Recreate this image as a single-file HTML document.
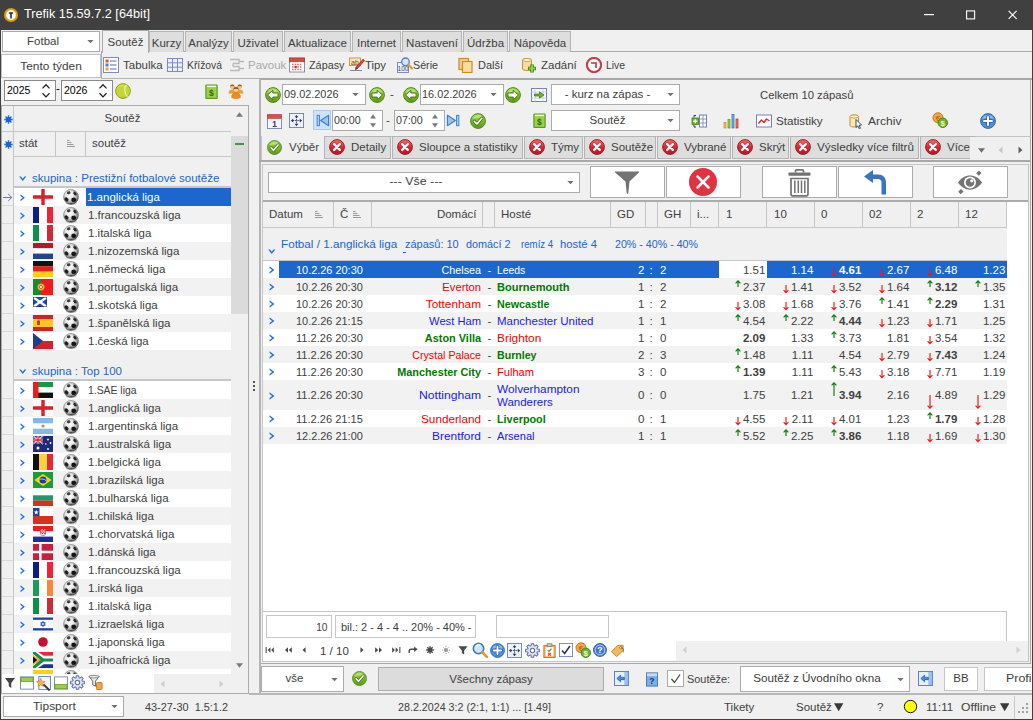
<!DOCTYPE html>
<html lang="cs"><head><meta charset="utf-8"><title>Trefik 15.59.7.2 [64bit]</title>
<style>
html,body{margin:0;padding:0;}
body{width:1033px;height:720px;overflow:hidden;background:#f0f0f0;font-family:"Liberation Sans",sans-serif;font-size:11.5px;color:#404040;position:relative;}
#w{position:absolute;left:0;top:0;width:1033px;height:720px;overflow:hidden;}
#w div,#w span.t,#w svg.i{position:absolute;box-sizing:border-box;}
#w span.t{white-space:nowrap;display:block;}
</style></head><body><div id="w">
<div style="left:0px;top:0px;width:1033px;height:30px;background:#404040;"></div>
<svg class="i" style="left:4px;top:8px;" width="14" height="14" viewBox="0 0 16 16" preserveAspectRatio="none"><circle cx="8" cy="8" r="6.800" fill="#f8f8f8" stroke="#e0a014" stroke-width="2.400"/><circle cx="8" cy="8" r="7.800" fill="none" stroke="#a87408" stroke-width=".4"/><path d="M5.600 4.800h4.800v1.700H8.900v5.400H7.100V6.500H5.600z" fill="#2a2a2a"/></svg>
<span class="t" style="left:24px;top:4px;line-height:20px;height:20px;color:#fff;font-size:13px;transform:scaleX(0.9777);transform-origin:0 0;">Trefik 15.59.7.2 [64bit]</span>
<svg class="i" style="left:924px;top:14px;" width="10" height="2" viewBox="0 0 10 2"><rect width="10" height="1.200" fill="#fff"/></svg>
<svg class="i" style="left:966px;top:10px;" width="10" height="10" viewBox="0 0 10 10"><rect x=".6" y=".9" width="8" height="8" fill="none" stroke="#fff" stroke-width="1.100"/></svg>
<svg class="i" style="left:1008px;top:10px;" width="10" height="10" viewBox="0 0 10 10"><path d="M.6 .9L8.600 8.900M8.600 .9L.6 8.900" stroke="#fff" stroke-width="1.150"/></svg>
<div style="left:101px;top:51px;width:932px;height:1px;background:#ababab"></div>
<div style="left:2px;top:31px;width:98px;height:21px;background:#fff;border:1px solid #ababab;"></div>
<span class="t" style="left:3px;top:31px;line-height:21px;height:21px;width:80px;text-align:center;">Fotbal</span>
<svg class="i" style="left:87px;top:40px;" width="7" height="4" viewBox="0 0 7 4"><path d="M.3 0h6.400L3.500 3.200z" fill="#727272"/></svg>
<div style="left:149px;top:31px;width:35px;height:21px;background:#dedede;border:1px solid #b4b4b4;border-bottom:none;"></div>
<span class="t" style="left:149px;top:34px;line-height:19px;height:19px;width:35px;text-align:center;">Kurzy</span>
<div style="left:185px;top:31px;width:47px;height:21px;background:#dedede;border:1px solid #b4b4b4;border-bottom:none;"></div>
<span class="t" style="left:185px;top:34px;line-height:19px;height:19px;width:47px;text-align:center;">Analýzy</span>
<div style="left:233px;top:31px;width:50px;height:21px;background:#dedede;border:1px solid #b4b4b4;border-bottom:none;"></div>
<span class="t" style="left:233px;top:34px;line-height:19px;height:19px;width:50px;text-align:center;">Uživatel</span>
<div style="left:284px;top:31px;width:67px;height:21px;background:#dedede;border:1px solid #b4b4b4;border-bottom:none;"></div>
<span class="t" style="left:284px;top:34px;line-height:19px;height:19px;width:67px;text-align:center;">Aktualizace</span>
<div style="left:352px;top:31px;width:49px;height:21px;background:#dedede;border:1px solid #b4b4b4;border-bottom:none;"></div>
<span class="t" style="left:352px;top:34px;line-height:19px;height:19px;width:49px;text-align:center;">Internet</span>
<div style="left:402px;top:31px;width:60px;height:21px;background:#dedede;border:1px solid #b4b4b4;border-bottom:none;"></div>
<span class="t" style="left:402px;top:34px;line-height:19px;height:19px;width:60px;text-align:center;">Nastavení</span>
<div style="left:463px;top:31px;width:45px;height:21px;background:#dedede;border:1px solid #b4b4b4;border-bottom:none;"></div>
<span class="t" style="left:463px;top:34px;line-height:19px;height:19px;width:45px;text-align:center;">Údržba</span>
<div style="left:509px;top:31px;width:62px;height:21px;background:#dedede;border:1px solid #b4b4b4;border-bottom:none;"></div>
<span class="t" style="left:509px;top:34px;line-height:19px;height:19px;width:62px;text-align:center;">Nápověda</span>
<div style="left:102px;top:30px;width:47px;height:23px;background:#f0f0f0;border:1px solid #ababab;border-bottom:none;"></div>
<span class="t" style="left:102px;top:32px;line-height:21px;height:21px;width:47px;text-align:center;">Soutěž</span>
<div style="left:1px;top:54px;width:100px;height:24px;background:#fff;border:1px solid #c0c0c0;"></div>
<span class="t" style="left:1px;top:54px;line-height:24px;height:24px;width:100px;text-align:center;transform:scaleX(1.0344);transform-origin:50% 0;">Tento týden</span>
<div style="left:101px;top:52px;width:1px;height:27px;background:#ababab"></div>
<svg class="i" style="left:103px;top:57px;" width="16" height="16" viewBox="0 0 16 16"><rect x=".5" y=".5" width="15" height="15" fill="#fff" stroke="#7c8cc0" stroke-width="1"/><rect x="2.500" y="2.500" width="3" height="3" fill="#e0503c"/><rect x="2.500" y="6.500" width="3" height="3" fill="#4d7fd0"/><rect x="2.500" y="10.500" width="3" height="3" fill="#f0a030"/><path d="M7 4h6.500M7 8h6.500M7 12h6.500" stroke="#5a6aa0" stroke-width="1.200"/></svg>
<span class="t" style="left:123px;top:55px;line-height:20px;height:20px;color:#404040;">Tabulka</span>
<svg class="i" style="left:167px;top:57px;" width="16" height="16" viewBox="0 0 16 16"><rect x=".5" y="1.500" width="15" height="13" fill="#eef2fb" stroke="#7c8cc0" stroke-width="1"/><path d="M.5 5.800h15M.5 10.200h15M5.500 1.500v13M10.500 1.500v13" stroke="#7c8cc0" stroke-width="1"/></svg>
<span class="t" style="left:187px;top:55px;line-height:20px;height:20px;color:#404040;transform:scaleX(0.8975);transform-origin:0 0;">Křížová</span>
<svg class="i" style="left:229px;top:57px;" width="16" height="16" viewBox="0 0 16 16"><path d="M1 2.500h9v4H4M4 9.500h6v4H1M10 4.500h5M10 11.500h5M4 6.500v3" fill="none" stroke="#b8b8b8" stroke-width="1.300"/></svg>
<span class="t" style="left:248px;top:55px;line-height:20px;height:20px;color:#a8a8a8;">Pavouk</span>
<svg class="i" style="left:289px;top:57px;" width="16" height="16" viewBox="0 0 16 16"><rect x=".5" y="1" width="15" height="14" fill="#fff" stroke="#8a8fae" stroke-width="1"/><rect x=".5" y="1" width="15" height="3.800" fill="#d84a3c" stroke="#b0301c" stroke-width=".6"/><path d="M3 7.500h10M3 10h10M3 12.500h10" stroke="#c87878" stroke-width="1.400" stroke-dasharray="1.600 1"/><rect x="5.600" y="9" width="2.200" height="2.200" fill="#d83030"/></svg>
<span class="t" style="left:309px;top:55px;line-height:20px;height:20px;color:#404040;transform:scaleX(0.9414);transform-origin:0 0;">Zápasy</span>
<svg class="i" style="left:349px;top:57px;" width="16" height="16" viewBox="0 0 16 16"><rect x=".5" y="1" width="11" height="7.500" fill="#fbe6b8" stroke="#c9922e" stroke-width=".9"/><text x="6" y="7.600" font-family="Liberation Sans, sans-serif" font-size="7" fill="#6a4a10" text-anchor="middle">ab</text><path d="M1 13.500h12" stroke="#888" stroke-width="1"/><path d="M15.500 3.500L8.500 11.500L6.500 12.500L7 10.300L14 2.300z" fill="#e04a3c" stroke="#9c2418" stroke-width=".8" stroke-linejoin="round"/><path d="M6.500 12.500L7 10.300L8.500 11.500z" fill="#2c3c6c"/></svg>
<span class="t" style="left:365px;top:55px;line-height:20px;height:20px;color:#404040;transform:scaleX(0.986);transform-origin:0 0;">Tipy</span>
<svg class="i" style="left:397px;top:57px;" width="16" height="16" viewBox="0 0 16 16"><rect x=".5" y="5.500" width="11" height="10" fill="#eef2fb" stroke="#7c8cc0" stroke-width="1"/><text x="6" y="14.300" font-family="Liberation Sans, sans-serif" font-size="6.500" fill="#34447a" text-anchor="middle">100</text><circle cx="8.500" cy="4.800" r="3.800" fill="#d8e8fb" stroke="#4d7fd0" stroke-width="1.300"/><path d="M11.300 7.600L15 11.500" stroke="#e09a30" stroke-width="2.200" stroke-linecap="round"/></svg>
<span class="t" style="left:413px;top:55px;line-height:20px;height:20px;color:#404040;transform:scaleX(0.931);transform-origin:0 0;">Série</span>
<svg class="i" style="left:458px;top:57px;" width="16" height="16" viewBox="0 0 16 16"><rect x="1" y="1.500" width="9.500" height="11" fill="#f8cc84" stroke="#d08a20" stroke-width="1.200"/><rect x="4.500" y="4.500" width="9.500" height="11" fill="#fbdca4" stroke="#d08a20" stroke-width="1.200"/></svg>
<span class="t" style="left:478px;top:55px;line-height:20px;height:20px;color:#404040;transform:scaleX(0.9543);transform-origin:0 0;">Další</span>
<svg class="i" style="left:521px;top:57px;" width="16" height="16" viewBox="0 0 16 16"><path d="M1.500 3c0-2 9-2 9 0v9c0 2-9 2-9 0z" fill="#f7dca0" stroke="#c9922e" stroke-width="1"/><ellipse cx="6" cy="3" rx="4.500" ry="1.500" fill="#fff4d6" stroke="#c9922e" stroke-width=".8"/><path d="M11 7.500v8M7 11.500h8" stroke="#3f7d12" stroke-width="3.600"/><path d="M11 8.200v6.600M7.700 11.500h6.600" stroke="#8fd24a" stroke-width="2"/></svg>
<span class="t" style="left:541px;top:55px;line-height:20px;height:20px;color:#404040;">Zadání</span>
<svg class="i" style="left:586px;top:57px;" width="16" height="16" viewBox="0 0 16 16"><circle cx="8" cy="8" r="7" fill="#fff" stroke="#d0454a" stroke-width="2"/><circle cx="8" cy="8" r="7.600" fill="none" stroke="#a82a30" stroke-width=".6"/><path d="M5 6h5v5" fill="none" stroke="#b0363c" stroke-width="1.600"/></svg>
<span class="t" style="left:606px;top:55px;line-height:20px;height:20px;color:#404040;transform:scaleX(0.9009);transform-origin:0 0;">Live</span>
<div style="left:101px;top:78px;width:158px;height:1px;background:#b4b4b4"></div>
<div style="left:259px;top:78px;width:773px;height:2px;background:#a8a8a8"></div>
<div style="left:4px;top:80px;width:52px;height:21px;background:#fff;border:1px solid #8a8a8a;"></div>
<span class="t" style="left:7px;top:80px;line-height:21px;height:21px;color:#000;transform:scaleX(0.9184);transform-origin:0 0;">2025</span>
<svg class="i" style="left:41px;top:82px;" width="10" height="17" viewBox="0 0 10 16" preserveAspectRatio="none"><path d="M1.500 6L5 2.500L8.500 6M1.500 10.500L5 14L8.500 10.500" fill="none" stroke="#222" stroke-width="1.300"/></svg>
<span class="t" style="left:56px;top:78px;line-height:20px;height:20px;color:#000;">-</span>
<div style="left:61px;top:80px;width:52px;height:21px;background:#fff;border:1px solid #8a8a8a;"></div>
<span class="t" style="left:64px;top:80px;line-height:21px;height:21px;color:#000;transform:scaleX(0.9184);transform-origin:0 0;">2026</span>
<svg class="i" style="left:98px;top:82px;" width="10" height="17" viewBox="0 0 10 16" preserveAspectRatio="none"><path d="M1.500 6L5 2.500L8.500 6M1.500 10.500L5 14L8.500 10.500" fill="none" stroke="#222" stroke-width="1.300"/></svg>
<svg class="i" style="left:115px;top:83px;" width="16" height="16" viewBox="0 0 16 16"><circle cx="8" cy="8" r="7.400" fill="#c6d636" stroke="#97a51e" stroke-width="1"/><path d="M3 3.500a6.500 6.500 0 0 1 9 1a9 7 0 0 0-9-1z" fill="#e9f08a" opacity=".9"/><path d="M11.500 1.800c-2.500 3.500-2.500 8.500 1 12" stroke="#f2f6c0" stroke-width="1.100" fill="none"/><path d="M3.500 13.500a7.400 7.400 0 0 0 10-1a8 6 0 0 1-10 1z" fill="#8f9c1c" opacity=".6"/></svg>
<svg class="i" style="left:204.5px;top:83.5px;" width="13" height="15" viewBox="0 0 16 16" preserveAspectRatio="none"><rect x="1" y="1" width="14" height="14.500" rx=".8" fill="#86c03c" stroke="#5a9a1c" stroke-width="1.200"/><rect x="2.300" y="1.800" width="11.400" height="1.700" fill="#f4fbe8"/><rect x="2.300" y="4" width="11.400" height="10.300" fill="#9ad04c"/><text x="8" y="13.300" font-family="Liberation Sans, sans-serif" font-size="10.500" font-weight="bold" fill="#2c6a0c" text-anchor="middle">$</text></svg>
<svg class="i" style="left:228px;top:83px;" width="16" height="16" viewBox="0 0 16 16"><circle cx="4.300" cy="3.800" r="2.300" fill="#f2c48c"/><path d="M2 3.800a2.300 2.300 0 0 1 4.600 0c-1-1-3.600-1-4.600 0z" fill="#9a5a1c"/><circle cx="11.700" cy="3.800" r="2.300" fill="#f2c48c"/><path d="M9.400 3.800a2.300 2.300 0 0 1 4.600 0c-1-1-3.600-1-4.600 0z" fill="#9a5a1c"/><path d="M.5 10.500c0-2.800 1.600-4 3.800-4s3 1 3.400 2v2z" fill="#f29a2c"/><path d="M15.500 10.500c0-2.800-1.600-4-3.800-4s-3 1-3.400 2v2z" fill="#f29a2c"/><circle cx="8" cy="6.800" r="2.600" fill="#f6cc98" stroke="#b87430" stroke-width=".4"/><path d="M5.400 6.600a2.600 2.600 0 0 1 5.200 0c-1.200-1.200-4-1.200-5.200 0z" fill="#8a4c14"/><path d="M3.600 14.600c0-3.400 1.900-5 4.400-5s4.400 1.600 4.400 5c-2.500 1.200-6.300 1.200-8.800 0z" fill="#f08c1c" stroke="#c46c10" stroke-width=".5"/></svg>
<div style="left:1px;top:105px;width:248px;height:589px;background:#fff;border:1px solid #ababab;"></div>
<div style="left:2px;top:106px;width:246px;height:50px;background:#f0f0f0;"></div>
<div style="left:14px;top:131px;width:217px;height:1px;background:#c6c6c6"></div>
<div style="left:2px;top:156px;width:229px;height:1px;background:#c6c6c6"></div>
<div style="left:2px;top:131px;width:12px;height:1px;background:#c6c6c6"></div>
<div style="left:13px;top:106px;width:1px;height:568px;background:#c6c6c6"></div>
<div style="left:55px;top:131px;width:1px;height:25px;background:#c6c6c6"></div>
<div style="left:85px;top:131px;width:1px;height:25px;background:#c6c6c6"></div>
<svg class="i" style="left:3.5px;top:114.5px;" width="9" height="9" viewBox="0 0 10 10" preserveAspectRatio="none"><path d="M5 .3v9.400M.3 5h9.400M1.700 1.700l6.600 6.600M8.300 1.700l-6.600 6.600" stroke="#2370dc" stroke-width="1.500"/><circle cx="5" cy="5" r="3.100" fill="#1a66d8"/></svg>
<svg class="i" style="left:3.5px;top:139.5px;" width="9" height="9" viewBox="0 0 10 10" preserveAspectRatio="none"><path d="M5 .3v9.400M.3 5h9.400M1.700 1.700l6.600 6.600M8.300 1.700l-6.600 6.600" stroke="#2370dc" stroke-width="1.500"/><circle cx="5" cy="5" r="3.100" fill="#1a66d8"/></svg>
<span class="t" style="left:14px;top:106px;line-height:24px;height:24px;width:217px;text-align:center;">Soutěž</span>
<span class="t" style="left:19px;top:131px;line-height:24px;height:24px;">stát</span>
<svg class="i" style="left:67px;top:140px;" width="8" height="7" viewBox="0 0 8 7"><path d="M0 .5h2.500M0 2.500h4.500M0 4.500h6.500M0 6.500h8" stroke="#9a9a9a" stroke-width="1"/></svg>
<span class="t" style="left:92px;top:131px;line-height:24px;height:24px;">soutěž</span>
<div style="left:231px;top:106px;width:17px;height:568px;background:#f0f0f0;"></div>
<svg class="i" style="left:235.5px;top:111.5px;" width="7" height="5" viewBox="0 0 7 5"><path d="M0 4.800L3.500 .2L7 4.800z" fill="#7a7a7a"/></svg>
<div style="left:231px;top:136px;width:17px;height:178px;background:#dbdbdb;"></div>
<svg class="i" style="left:235px;top:143px;" width="9" height="2" viewBox="0 0 9 2"><rect width="9" height="2" fill="#3a9a3a"/></svg>
<svg class="i" style="left:235.5px;top:663px;" width="7" height="5" viewBox="0 0 7 5"><path d="M0 .2L3.500 4.800L7 .2z" fill="#7a7a7a"/></svg>
<div style="left:2px;top:156px;width:11px;height:518px;background:#f0f0f0;"></div>
<div style="left:14px;top:157px;width:217px;height:31px;background:#f0f0f0;"></div>
<svg class="i" style="left:19px;top:176px;" width="7.5" height="5" viewBox="0 0 8 5" preserveAspectRatio="none"><path d="M.2 .5L4 4.900L7.800 .5L5.900 .5L4 2.800L2.100 .5z" fill="#2370dc"/></svg>
<span class="t" style="left:32px;top:169px;line-height:18px;height:18px;color:#1a66cc;">skupina : Prestižní fotbalové soutěže</span>
<div style="left:14px;top:186px;width:217px;height:2px;background:#c6c6c6"></div>
<div style="left:14px;top:188px;width:217px;height:18px;background:#fff;"></div>
<div style="left:2px;top:205px;width:11px;height:1px;background:#d8d8d8"></div>
<svg class="i" style="left:20px;top:194px;" width="5" height="7.5" viewBox="0 0 5 8" preserveAspectRatio="none"><path d="M.5 .2L4.900 4L.5 7.800L.5 5.900L2.800 4L.5 2.100z" fill="#2370dc"/></svg>
<svg class="i" style="left:33px;top:189px;" width="20" height="16" viewBox="0 0 20 16"><rect width="20" height="16" fill="#fff"/><path d="M8.300 0h3.400v16H8.300zM0 6.300h20v3.400H0z" fill="#d8202c"/></svg>
<svg class="i" style="left:63px;top:189px;" width="16" height="16" viewBox="0 0 16 16"><defs><radialGradient id="bg1" cx="0.42" cy="0.38" r="0.62"><stop offset="0" stop-color="#ffffff"/><stop offset="0.45" stop-color="#e4e4e4"/><stop offset="0.78" stop-color="#a0a0a0"/><stop offset="1" stop-color="#484848"/></radialGradient></defs><ellipse cx="8.300" cy="14.300" rx="5.500" ry="1.500" fill="#000" opacity=".22"/><circle cx="8" cy="7.900" r="7.600" fill="url(#bg1)"/><path d="M4.300 2.600L6.800 2.200L7.600 4.200L5.600 5.400L3.800 4.400z" fill="#3a3a3a"/><path d="M10.800 2.300L13.400 3.800L13.900 6.200L11.800 6.400L10.300 4.600z" fill="#2a2a2a"/><path d="M1.600 8.800L3.600 8.200L5.600 10.200L5 12.600L3 12.400L1.500 10.600z" fill="#1e1e1e"/><path d="M8.800 9L11.600 8.400L13.400 10.400L12.400 12.800L9.600 13L8.200 11.200z" fill="#161616"/><path d="M6.400 14.200L8.600 14L9.600 14.900a7 7 0 0 1-3.200-.1z" fill="#444"/><circle cx="8" cy="7.900" r="7.400" fill="none" stroke="#707070" stroke-width=".6" opacity=".8"/></svg>
<div style="left:86px;top:188px;width:145px;height:18px;background:#1b67cd;"></div>
<span class="t" style="left:87px;top:188px;line-height:18px;height:18px;color:#fff;">1.anglická liga</span>
<div style="left:14px;top:206px;width:217px;height:18px;background:#f2f2f2;"></div>
<div style="left:2px;top:223px;width:11px;height:1px;background:#d8d8d8"></div>
<svg class="i" style="left:20px;top:212px;" width="5" height="7.5" viewBox="0 0 5 8" preserveAspectRatio="none"><path d="M.5 .2L4.900 4L.5 7.800L.5 5.900L2.800 4L.5 2.100z" fill="#2370dc"/></svg>
<svg class="i" style="left:33px;top:207px;" width="20" height="16" viewBox="0 0 20 16"><rect width="6" height="16" fill="#0c1c8c"/><rect x="6" width="8" height="16" fill="#fff"/><rect x="14" width="6" height="16" fill="#ee2436"/></svg>
<svg class="i" style="left:63px;top:207px;" width="16" height="16" viewBox="0 0 16 16"><defs><radialGradient id="bg1" cx="0.42" cy="0.38" r="0.62"><stop offset="0" stop-color="#ffffff"/><stop offset="0.45" stop-color="#e4e4e4"/><stop offset="0.78" stop-color="#a0a0a0"/><stop offset="1" stop-color="#484848"/></radialGradient></defs><ellipse cx="8.300" cy="14.300" rx="5.500" ry="1.500" fill="#000" opacity=".22"/><circle cx="8" cy="7.900" r="7.600" fill="url(#bg1)"/><path d="M4.300 2.600L6.800 2.200L7.600 4.200L5.600 5.400L3.800 4.400z" fill="#3a3a3a"/><path d="M10.800 2.300L13.400 3.800L13.900 6.200L11.800 6.400L10.300 4.600z" fill="#2a2a2a"/><path d="M1.600 8.800L3.600 8.200L5.600 10.200L5 12.600L3 12.400L1.500 10.600z" fill="#1e1e1e"/><path d="M8.800 9L11.600 8.400L13.400 10.400L12.400 12.800L9.600 13L8.200 11.200z" fill="#161616"/><path d="M6.400 14.200L8.600 14L9.600 14.900a7 7 0 0 1-3.200-.1z" fill="#444"/><circle cx="8" cy="7.900" r="7.400" fill="none" stroke="#707070" stroke-width=".6" opacity=".8"/></svg>
<span class="t" style="left:88px;top:206px;line-height:18px;height:18px;">1.francouzská liga</span>
<div style="left:14px;top:224px;width:217px;height:18px;background:#fff;"></div>
<div style="left:2px;top:241px;width:11px;height:1px;background:#d8d8d8"></div>
<svg class="i" style="left:20px;top:230px;" width="5" height="7.5" viewBox="0 0 5 8" preserveAspectRatio="none"><path d="M.5 .2L4.900 4L.5 7.800L.5 5.900L2.800 4L.5 2.100z" fill="#2370dc"/></svg>
<svg class="i" style="left:33px;top:225px;" width="20" height="16" viewBox="0 0 20 16"><rect width="6" height="16" fill="#0c9246"/><rect x="6" width="8" height="16" fill="#fff"/><rect x="14" width="6" height="16" fill="#ce2b37"/></svg>
<svg class="i" style="left:63px;top:225px;" width="16" height="16" viewBox="0 0 16 16"><defs><radialGradient id="bg1" cx="0.42" cy="0.38" r="0.62"><stop offset="0" stop-color="#ffffff"/><stop offset="0.45" stop-color="#e4e4e4"/><stop offset="0.78" stop-color="#a0a0a0"/><stop offset="1" stop-color="#484848"/></radialGradient></defs><ellipse cx="8.300" cy="14.300" rx="5.500" ry="1.500" fill="#000" opacity=".22"/><circle cx="8" cy="7.900" r="7.600" fill="url(#bg1)"/><path d="M4.300 2.600L6.800 2.200L7.600 4.200L5.600 5.400L3.800 4.400z" fill="#3a3a3a"/><path d="M10.800 2.300L13.400 3.800L13.900 6.200L11.800 6.400L10.300 4.600z" fill="#2a2a2a"/><path d="M1.600 8.800L3.600 8.200L5.600 10.200L5 12.600L3 12.400L1.500 10.600z" fill="#1e1e1e"/><path d="M8.800 9L11.600 8.400L13.400 10.400L12.400 12.800L9.600 13L8.200 11.200z" fill="#161616"/><path d="M6.400 14.200L8.600 14L9.600 14.900a7 7 0 0 1-3.200-.1z" fill="#444"/><circle cx="8" cy="7.900" r="7.400" fill="none" stroke="#707070" stroke-width=".6" opacity=".8"/></svg>
<span class="t" style="left:88px;top:224px;line-height:18px;height:18px;">1.italská liga</span>
<div style="left:14px;top:242px;width:217px;height:18px;background:#f2f2f2;"></div>
<div style="left:2px;top:259px;width:11px;height:1px;background:#d8d8d8"></div>
<svg class="i" style="left:20px;top:248px;" width="5" height="7.5" viewBox="0 0 5 8" preserveAspectRatio="none"><path d="M.5 .2L4.900 4L.5 7.800L.5 5.900L2.800 4L.5 2.100z" fill="#2370dc"/></svg>
<svg class="i" style="left:33px;top:243px;" width="20" height="16" viewBox="0 0 20 16"><rect width="20" height="5.4" fill="#ae1c28"/><rect y="5.300" width="20" height="5.400" fill="#fff"/><rect y="10.600" width="20" height="5.400" fill="#21468b"/></svg>
<svg class="i" style="left:63px;top:243px;" width="16" height="16" viewBox="0 0 16 16"><defs><radialGradient id="bg1" cx="0.42" cy="0.38" r="0.62"><stop offset="0" stop-color="#ffffff"/><stop offset="0.45" stop-color="#e4e4e4"/><stop offset="0.78" stop-color="#a0a0a0"/><stop offset="1" stop-color="#484848"/></radialGradient></defs><ellipse cx="8.300" cy="14.300" rx="5.500" ry="1.500" fill="#000" opacity=".22"/><circle cx="8" cy="7.900" r="7.600" fill="url(#bg1)"/><path d="M4.300 2.600L6.800 2.200L7.600 4.200L5.600 5.400L3.800 4.400z" fill="#3a3a3a"/><path d="M10.800 2.300L13.400 3.800L13.900 6.200L11.800 6.400L10.300 4.600z" fill="#2a2a2a"/><path d="M1.600 8.800L3.600 8.200L5.600 10.200L5 12.600L3 12.400L1.500 10.600z" fill="#1e1e1e"/><path d="M8.800 9L11.600 8.400L13.400 10.400L12.400 12.800L9.600 13L8.200 11.200z" fill="#161616"/><path d="M6.400 14.200L8.600 14L9.600 14.900a7 7 0 0 1-3.200-.1z" fill="#444"/><circle cx="8" cy="7.900" r="7.400" fill="none" stroke="#707070" stroke-width=".6" opacity=".8"/></svg>
<span class="t" style="left:88px;top:242px;line-height:18px;height:18px;">1.nizozemská liga</span>
<div style="left:14px;top:260px;width:217px;height:18px;background:#fff;"></div>
<div style="left:2px;top:277px;width:11px;height:1px;background:#d8d8d8"></div>
<svg class="i" style="left:20px;top:266px;" width="5" height="7.5" viewBox="0 0 5 8" preserveAspectRatio="none"><path d="M.5 .2L4.900 4L.5 7.800L.5 5.900L2.800 4L.5 2.100z" fill="#2370dc"/></svg>
<svg class="i" style="left:33px;top:261px;" width="20" height="16" viewBox="0 0 20 16"><rect width="20" height="5.4" fill="#111"/><rect y="5.300" width="20" height="5.400" fill="#e0201c"/><rect y="10.600" width="20" height="5.400" fill="#fcd116"/></svg>
<svg class="i" style="left:63px;top:261px;" width="16" height="16" viewBox="0 0 16 16"><defs><radialGradient id="bg1" cx="0.42" cy="0.38" r="0.62"><stop offset="0" stop-color="#ffffff"/><stop offset="0.45" stop-color="#e4e4e4"/><stop offset="0.78" stop-color="#a0a0a0"/><stop offset="1" stop-color="#484848"/></radialGradient></defs><ellipse cx="8.300" cy="14.300" rx="5.500" ry="1.500" fill="#000" opacity=".22"/><circle cx="8" cy="7.900" r="7.600" fill="url(#bg1)"/><path d="M4.300 2.600L6.800 2.200L7.600 4.200L5.600 5.400L3.800 4.400z" fill="#3a3a3a"/><path d="M10.800 2.300L13.400 3.800L13.900 6.200L11.800 6.400L10.300 4.600z" fill="#2a2a2a"/><path d="M1.600 8.800L3.600 8.200L5.600 10.200L5 12.600L3 12.400L1.500 10.600z" fill="#1e1e1e"/><path d="M8.800 9L11.600 8.400L13.400 10.400L12.400 12.800L9.600 13L8.200 11.200z" fill="#161616"/><path d="M6.400 14.200L8.600 14L9.600 14.900a7 7 0 0 1-3.200-.1z" fill="#444"/><circle cx="8" cy="7.900" r="7.400" fill="none" stroke="#707070" stroke-width=".6" opacity=".8"/></svg>
<span class="t" style="left:88px;top:260px;line-height:18px;height:18px;">1.německá liga</span>
<div style="left:14px;top:278px;width:217px;height:18px;background:#f2f2f2;"></div>
<div style="left:2px;top:295px;width:11px;height:1px;background:#d8d8d8"></div>
<svg class="i" style="left:20px;top:284px;" width="5" height="7.5" viewBox="0 0 5 8" preserveAspectRatio="none"><path d="M.5 .2L4.900 4L.5 7.800L.5 5.900L2.800 4L.5 2.100z" fill="#2370dc"/></svg>
<svg class="i" style="left:33px;top:279px;" width="20" height="16" viewBox="0 0 20 16"><rect width="20" height="16" fill="#f01c1c"/><rect width="8" height="16" fill="#1c8a2c"/><circle cx="8" cy="8" r="3.300" fill="#f7d23a" stroke="#c98a1c" stroke-width=".6"/><circle cx="8" cy="8" r="1.700" fill="#e8e8e8" stroke="#d0303a" stroke-width=".8"/></svg>
<svg class="i" style="left:63px;top:279px;" width="16" height="16" viewBox="0 0 16 16"><defs><radialGradient id="bg1" cx="0.42" cy="0.38" r="0.62"><stop offset="0" stop-color="#ffffff"/><stop offset="0.45" stop-color="#e4e4e4"/><stop offset="0.78" stop-color="#a0a0a0"/><stop offset="1" stop-color="#484848"/></radialGradient></defs><ellipse cx="8.300" cy="14.300" rx="5.500" ry="1.500" fill="#000" opacity=".22"/><circle cx="8" cy="7.900" r="7.600" fill="url(#bg1)"/><path d="M4.300 2.600L6.800 2.200L7.600 4.200L5.600 5.400L3.800 4.400z" fill="#3a3a3a"/><path d="M10.800 2.300L13.400 3.800L13.900 6.200L11.800 6.400L10.300 4.600z" fill="#2a2a2a"/><path d="M1.600 8.800L3.600 8.200L5.600 10.200L5 12.600L3 12.400L1.500 10.600z" fill="#1e1e1e"/><path d="M8.800 9L11.600 8.400L13.400 10.400L12.400 12.800L9.600 13L8.200 11.200z" fill="#161616"/><path d="M6.400 14.200L8.600 14L9.600 14.900a7 7 0 0 1-3.200-.1z" fill="#444"/><circle cx="8" cy="7.900" r="7.400" fill="none" stroke="#707070" stroke-width=".6" opacity=".8"/></svg>
<span class="t" style="left:88px;top:278px;line-height:18px;height:18px;">1.portugalská liga</span>
<div style="left:14px;top:296px;width:217px;height:18px;background:#fff;"></div>
<div style="left:2px;top:313px;width:11px;height:1px;background:#d8d8d8"></div>
<svg class="i" style="left:20px;top:302px;" width="5" height="7.5" viewBox="0 0 5 8" preserveAspectRatio="none"><path d="M.5 .2L4.900 4L.5 7.800L.5 5.900L2.800 4L.5 2.100z" fill="#2370dc"/></svg>
<svg class="i" style="left:33px;top:297px;" width="14" height="10" viewBox="0 0 14 10"><rect width="14" height="10" fill="#1c4aa8"/><path d="M0 0L14 10M14 0L0 10" stroke="#fff" stroke-width="2.400"/><rect x=".25" y=".25" width="13.500" height="9.500" fill="none" stroke="#16327a" stroke-width=".5"/></svg>
<svg class="i" style="left:63px;top:297px;" width="16" height="16" viewBox="0 0 16 16"><defs><radialGradient id="bg1" cx="0.42" cy="0.38" r="0.62"><stop offset="0" stop-color="#ffffff"/><stop offset="0.45" stop-color="#e4e4e4"/><stop offset="0.78" stop-color="#a0a0a0"/><stop offset="1" stop-color="#484848"/></radialGradient></defs><ellipse cx="8.300" cy="14.300" rx="5.500" ry="1.500" fill="#000" opacity=".22"/><circle cx="8" cy="7.900" r="7.600" fill="url(#bg1)"/><path d="M4.300 2.600L6.800 2.200L7.600 4.200L5.600 5.400L3.800 4.400z" fill="#3a3a3a"/><path d="M10.800 2.300L13.400 3.800L13.900 6.200L11.800 6.400L10.300 4.600z" fill="#2a2a2a"/><path d="M1.600 8.800L3.600 8.200L5.600 10.200L5 12.600L3 12.400L1.500 10.600z" fill="#1e1e1e"/><path d="M8.800 9L11.600 8.400L13.400 10.400L12.400 12.800L9.600 13L8.200 11.200z" fill="#161616"/><path d="M6.400 14.200L8.600 14L9.600 14.900a7 7 0 0 1-3.200-.1z" fill="#444"/><circle cx="8" cy="7.900" r="7.400" fill="none" stroke="#707070" stroke-width=".6" opacity=".8"/></svg>
<span class="t" style="left:88px;top:296px;line-height:18px;height:18px;">1.skotská liga</span>
<div style="left:14px;top:314px;width:217px;height:18px;background:#f2f2f2;"></div>
<div style="left:2px;top:331px;width:11px;height:1px;background:#d8d8d8"></div>
<svg class="i" style="left:20px;top:320px;" width="5" height="7.5" viewBox="0 0 5 8" preserveAspectRatio="none"><path d="M.5 .2L4.900 4L.5 7.800L.5 5.900L2.800 4L.5 2.100z" fill="#2370dc"/></svg>
<svg class="i" style="left:33px;top:315px;" width="20" height="16" viewBox="0 0 20 16"><rect width="20" height="16" fill="#d02028"/><rect y="4" width="20" height="8" fill="#fcc81c"/><rect x="4" y="6" width="3" height="4" fill="#a0522c"/><rect x="4.600" y="5.300" width="1.800" height="1.200" fill="#c03028"/></svg>
<svg class="i" style="left:63px;top:315px;" width="16" height="16" viewBox="0 0 16 16"><defs><radialGradient id="bg1" cx="0.42" cy="0.38" r="0.62"><stop offset="0" stop-color="#ffffff"/><stop offset="0.45" stop-color="#e4e4e4"/><stop offset="0.78" stop-color="#a0a0a0"/><stop offset="1" stop-color="#484848"/></radialGradient></defs><ellipse cx="8.300" cy="14.300" rx="5.500" ry="1.500" fill="#000" opacity=".22"/><circle cx="8" cy="7.900" r="7.600" fill="url(#bg1)"/><path d="M4.300 2.600L6.800 2.200L7.600 4.200L5.600 5.400L3.800 4.400z" fill="#3a3a3a"/><path d="M10.800 2.300L13.400 3.800L13.900 6.200L11.800 6.400L10.300 4.600z" fill="#2a2a2a"/><path d="M1.600 8.800L3.600 8.200L5.600 10.200L5 12.600L3 12.400L1.500 10.600z" fill="#1e1e1e"/><path d="M8.800 9L11.600 8.400L13.400 10.400L12.400 12.800L9.600 13L8.200 11.200z" fill="#161616"/><path d="M6.400 14.200L8.600 14L9.600 14.900a7 7 0 0 1-3.200-.1z" fill="#444"/><circle cx="8" cy="7.900" r="7.400" fill="none" stroke="#707070" stroke-width=".6" opacity=".8"/></svg>
<span class="t" style="left:88px;top:314px;line-height:18px;height:18px;">1.španělská liga</span>
<div style="left:14px;top:332px;width:217px;height:18px;background:#fff;"></div>
<div style="left:2px;top:349px;width:11px;height:1px;background:#d8d8d8"></div>
<svg class="i" style="left:20px;top:338px;" width="5" height="7.5" viewBox="0 0 5 8" preserveAspectRatio="none"><path d="M.5 .2L4.900 4L.5 7.800L.5 5.900L2.800 4L.5 2.100z" fill="#2370dc"/></svg>
<svg class="i" style="left:33px;top:333px;" width="20" height="16" viewBox="0 0 20 16"><rect width="20" height="8" fill="#fff"/><rect y="8" width="20" height="8" fill="#d8202c"/><path d="M0 0L10 8L0 16z" fill="#1c3f8c"/></svg>
<svg class="i" style="left:63px;top:333px;" width="16" height="16" viewBox="0 0 16 16"><defs><radialGradient id="bg1" cx="0.42" cy="0.38" r="0.62"><stop offset="0" stop-color="#ffffff"/><stop offset="0.45" stop-color="#e4e4e4"/><stop offset="0.78" stop-color="#a0a0a0"/><stop offset="1" stop-color="#484848"/></radialGradient></defs><ellipse cx="8.300" cy="14.300" rx="5.500" ry="1.500" fill="#000" opacity=".22"/><circle cx="8" cy="7.900" r="7.600" fill="url(#bg1)"/><path d="M4.300 2.600L6.800 2.200L7.600 4.200L5.600 5.400L3.800 4.400z" fill="#3a3a3a"/><path d="M10.800 2.300L13.400 3.800L13.900 6.200L11.800 6.400L10.300 4.600z" fill="#2a2a2a"/><path d="M1.600 8.800L3.600 8.200L5.600 10.200L5 12.600L3 12.400L1.500 10.600z" fill="#1e1e1e"/><path d="M8.800 9L11.600 8.400L13.400 10.400L12.400 12.800L9.600 13L8.200 11.200z" fill="#161616"/><path d="M6.400 14.200L8.600 14L9.600 14.900a7 7 0 0 1-3.200-.1z" fill="#444"/><circle cx="8" cy="7.900" r="7.400" fill="none" stroke="#707070" stroke-width=".6" opacity=".8"/></svg>
<span class="t" style="left:88px;top:332px;line-height:18px;height:18px;">1.česká liga</span>
<svg class="i" style="left:3px;top:193px;" width="10" height="9" viewBox="0 0 10 9"><path d="M0 4.500h8.500M5.200 1L8.800 4.500L5.200 8" fill="none" stroke="#2a74dd" stroke-width=".9"/></svg>
<div style="left:14px;top:350px;width:217px;height:30px;background:#f0f0f0;"></div>
<svg class="i" style="left:19px;top:369px;" width="7.5" height="5" viewBox="0 0 8 5" preserveAspectRatio="none"><path d="M.2 .5L4 4.900L7.800 .5L5.900 .5L4 2.800L2.100 .5z" fill="#2370dc"/></svg>
<span class="t" style="left:32px;top:362px;line-height:18px;height:18px;color:#1a66cc;">skupina : Top 100</span>
<div style="left:14px;top:379px;width:217px;height:2px;background:#c6c6c6"></div>
<div style="left:14px;top:381px;width:217px;height:18px;background:#fff;"></div>
<div style="left:2px;top:398px;width:11px;height:1px;background:#d8d8d8"></div>
<svg class="i" style="left:20px;top:387px;" width="5" height="7.5" viewBox="0 0 5 8" preserveAspectRatio="none"><path d="M.5 .2L4.900 4L.5 7.800L.5 5.900L2.800 4L.5 2.100z" fill="#2370dc"/></svg>
<svg class="i" style="left:33px;top:382px;" width="20" height="16" viewBox="0 0 20 16"><rect width="20" height="5.400" fill="#149a48"/><rect y="5.300" width="20" height="5.400" fill="#fff"/><rect y="10.600" width="20" height="5.400" fill="#111"/><rect width="5.500" height="16" fill="#f01c1c"/></svg>
<svg class="i" style="left:63px;top:382px;" width="16" height="16" viewBox="0 0 16 16"><defs><radialGradient id="bg1" cx="0.42" cy="0.38" r="0.62"><stop offset="0" stop-color="#ffffff"/><stop offset="0.45" stop-color="#e4e4e4"/><stop offset="0.78" stop-color="#a0a0a0"/><stop offset="1" stop-color="#484848"/></radialGradient></defs><ellipse cx="8.300" cy="14.300" rx="5.500" ry="1.500" fill="#000" opacity=".22"/><circle cx="8" cy="7.900" r="7.600" fill="url(#bg1)"/><path d="M4.300 2.600L6.800 2.200L7.600 4.200L5.600 5.400L3.800 4.400z" fill="#3a3a3a"/><path d="M10.800 2.300L13.400 3.800L13.900 6.200L11.800 6.400L10.300 4.600z" fill="#2a2a2a"/><path d="M1.600 8.800L3.600 8.200L5.600 10.200L5 12.600L3 12.400L1.500 10.600z" fill="#1e1e1e"/><path d="M8.800 9L11.600 8.400L13.400 10.400L12.400 12.800L9.600 13L8.200 11.200z" fill="#161616"/><path d="M6.400 14.200L8.600 14L9.600 14.900a7 7 0 0 1-3.200-.1z" fill="#444"/><circle cx="8" cy="7.900" r="7.400" fill="none" stroke="#707070" stroke-width=".6" opacity=".8"/></svg>
<span class="t" style="left:88px;top:381px;line-height:18px;height:18px;transform:scaleX(0.9031);transform-origin:0 0;">1.SAE liga</span>
<div style="left:14px;top:399px;width:217px;height:18px;background:#f2f2f2;"></div>
<div style="left:2px;top:416px;width:11px;height:1px;background:#d8d8d8"></div>
<svg class="i" style="left:20px;top:405px;" width="5" height="7.5" viewBox="0 0 5 8" preserveAspectRatio="none"><path d="M.5 .2L4.900 4L.5 7.800L.5 5.900L2.800 4L.5 2.100z" fill="#2370dc"/></svg>
<svg class="i" style="left:33px;top:400px;" width="20" height="16" viewBox="0 0 20 16"><rect width="20" height="16" fill="#fff"/><path d="M8.300 0h3.400v16H8.300zM0 6.300h20v3.400H0z" fill="#d8202c"/></svg>
<svg class="i" style="left:63px;top:400px;" width="16" height="16" viewBox="0 0 16 16"><defs><radialGradient id="bg1" cx="0.42" cy="0.38" r="0.62"><stop offset="0" stop-color="#ffffff"/><stop offset="0.45" stop-color="#e4e4e4"/><stop offset="0.78" stop-color="#a0a0a0"/><stop offset="1" stop-color="#484848"/></radialGradient></defs><ellipse cx="8.300" cy="14.300" rx="5.500" ry="1.500" fill="#000" opacity=".22"/><circle cx="8" cy="7.900" r="7.600" fill="url(#bg1)"/><path d="M4.300 2.600L6.800 2.200L7.600 4.200L5.600 5.400L3.800 4.400z" fill="#3a3a3a"/><path d="M10.800 2.300L13.400 3.800L13.900 6.200L11.800 6.400L10.300 4.600z" fill="#2a2a2a"/><path d="M1.600 8.800L3.600 8.200L5.600 10.200L5 12.600L3 12.400L1.500 10.600z" fill="#1e1e1e"/><path d="M8.800 9L11.600 8.400L13.400 10.400L12.400 12.800L9.600 13L8.200 11.200z" fill="#161616"/><path d="M6.400 14.200L8.600 14L9.600 14.900a7 7 0 0 1-3.200-.1z" fill="#444"/><circle cx="8" cy="7.900" r="7.400" fill="none" stroke="#707070" stroke-width=".6" opacity=".8"/></svg>
<span class="t" style="left:88px;top:399px;line-height:18px;height:18px;">1.anglická liga</span>
<div style="left:14px;top:417px;width:217px;height:18px;background:#fff;"></div>
<div style="left:2px;top:434px;width:11px;height:1px;background:#d8d8d8"></div>
<svg class="i" style="left:20px;top:423px;" width="5" height="7.5" viewBox="0 0 5 8" preserveAspectRatio="none"><path d="M.5 .2L4.900 4L.5 7.800L.5 5.900L2.800 4L.5 2.100z" fill="#2370dc"/></svg>
<svg class="i" style="left:33px;top:418px;" width="20" height="16" viewBox="0 0 20 16"><rect width="20" height="16" fill="#fff"/><rect width="20" height="5.300" fill="#86b8e8"/><rect y="10.700" width="20" height="5.300" fill="#86b8e8"/><circle cx="10" cy="8" r="1.600" fill="#d88a2c"/></svg>
<svg class="i" style="left:63px;top:418px;" width="16" height="16" viewBox="0 0 16 16"><defs><radialGradient id="bg1" cx="0.42" cy="0.38" r="0.62"><stop offset="0" stop-color="#ffffff"/><stop offset="0.45" stop-color="#e4e4e4"/><stop offset="0.78" stop-color="#a0a0a0"/><stop offset="1" stop-color="#484848"/></radialGradient></defs><ellipse cx="8.300" cy="14.300" rx="5.500" ry="1.500" fill="#000" opacity=".22"/><circle cx="8" cy="7.900" r="7.600" fill="url(#bg1)"/><path d="M4.300 2.600L6.800 2.200L7.600 4.200L5.600 5.400L3.800 4.400z" fill="#3a3a3a"/><path d="M10.800 2.300L13.400 3.800L13.900 6.200L11.800 6.400L10.300 4.600z" fill="#2a2a2a"/><path d="M1.600 8.800L3.600 8.200L5.600 10.200L5 12.600L3 12.400L1.500 10.600z" fill="#1e1e1e"/><path d="M8.800 9L11.600 8.400L13.400 10.400L12.400 12.800L9.600 13L8.200 11.200z" fill="#161616"/><path d="M6.400 14.200L8.600 14L9.600 14.900a7 7 0 0 1-3.200-.1z" fill="#444"/><circle cx="8" cy="7.900" r="7.400" fill="none" stroke="#707070" stroke-width=".6" opacity=".8"/></svg>
<span class="t" style="left:88px;top:417px;line-height:18px;height:18px;">1.argentinská liga</span>
<div style="left:14px;top:435px;width:217px;height:18px;background:#f2f2f2;"></div>
<div style="left:2px;top:452px;width:11px;height:1px;background:#d8d8d8"></div>
<svg class="i" style="left:20px;top:441px;" width="5" height="7.5" viewBox="0 0 5 8" preserveAspectRatio="none"><path d="M.5 .2L4.900 4L.5 7.800L.5 5.900L2.800 4L.5 2.100z" fill="#2370dc"/></svg>
<svg class="i" style="left:33px;top:436px;" width="20" height="16" viewBox="0 0 20 16"><rect width="20" height="16" fill="#1c2a7c"/><path d="M0 0L10 8M10 0L0 8" stroke="#fff" stroke-width="1.600"/><path d="M0 0L10 8M10 0L0 8" stroke="#d8202c" stroke-width=".7"/><path d="M5 0v8M0 4h10" stroke="#fff" stroke-width="2.400"/><path d="M5 0v8M0 4h10" stroke="#d8202c" stroke-width="1.300"/><circle cx="5" cy="12" r="1.500" fill="#fff"/><circle cx="15" cy="3.500" r=".9" fill="#fff"/><circle cx="17.500" cy="7" r=".9" fill="#fff"/><circle cx="15" cy="13" r=".9" fill="#fff"/><circle cx="12.800" cy="8" r=".8" fill="#fff"/></svg>
<svg class="i" style="left:63px;top:436px;" width="16" height="16" viewBox="0 0 16 16"><defs><radialGradient id="bg1" cx="0.42" cy="0.38" r="0.62"><stop offset="0" stop-color="#ffffff"/><stop offset="0.45" stop-color="#e4e4e4"/><stop offset="0.78" stop-color="#a0a0a0"/><stop offset="1" stop-color="#484848"/></radialGradient></defs><ellipse cx="8.300" cy="14.300" rx="5.500" ry="1.500" fill="#000" opacity=".22"/><circle cx="8" cy="7.900" r="7.600" fill="url(#bg1)"/><path d="M4.300 2.600L6.800 2.200L7.600 4.200L5.600 5.400L3.800 4.400z" fill="#3a3a3a"/><path d="M10.800 2.300L13.400 3.800L13.900 6.200L11.800 6.400L10.300 4.600z" fill="#2a2a2a"/><path d="M1.600 8.800L3.600 8.200L5.600 10.200L5 12.600L3 12.400L1.500 10.600z" fill="#1e1e1e"/><path d="M8.800 9L11.600 8.400L13.400 10.400L12.400 12.800L9.600 13L8.200 11.200z" fill="#161616"/><path d="M6.400 14.200L8.600 14L9.600 14.900a7 7 0 0 1-3.200-.1z" fill="#444"/><circle cx="8" cy="7.900" r="7.400" fill="none" stroke="#707070" stroke-width=".6" opacity=".8"/></svg>
<span class="t" style="left:88px;top:435px;line-height:18px;height:18px;">1.australská liga</span>
<div style="left:14px;top:453px;width:217px;height:18px;background:#fff;"></div>
<div style="left:2px;top:470px;width:11px;height:1px;background:#d8d8d8"></div>
<svg class="i" style="left:20px;top:459px;" width="5" height="7.5" viewBox="0 0 5 8" preserveAspectRatio="none"><path d="M.5 .2L4.900 4L.5 7.800L.5 5.900L2.800 4L.5 2.100z" fill="#2370dc"/></svg>
<svg class="i" style="left:33px;top:454px;" width="20" height="16" viewBox="0 0 20 16"><rect width="6" height="16" fill="#111"/><rect x="6" width="8" height="16" fill="#f7d23a"/><rect x="14" width="6" height="16" fill="#e8283a"/></svg>
<svg class="i" style="left:63px;top:454px;" width="16" height="16" viewBox="0 0 16 16"><defs><radialGradient id="bg1" cx="0.42" cy="0.38" r="0.62"><stop offset="0" stop-color="#ffffff"/><stop offset="0.45" stop-color="#e4e4e4"/><stop offset="0.78" stop-color="#a0a0a0"/><stop offset="1" stop-color="#484848"/></radialGradient></defs><ellipse cx="8.300" cy="14.300" rx="5.500" ry="1.500" fill="#000" opacity=".22"/><circle cx="8" cy="7.900" r="7.600" fill="url(#bg1)"/><path d="M4.300 2.600L6.800 2.200L7.600 4.200L5.600 5.400L3.800 4.400z" fill="#3a3a3a"/><path d="M10.800 2.300L13.400 3.800L13.900 6.200L11.800 6.400L10.300 4.600z" fill="#2a2a2a"/><path d="M1.600 8.800L3.600 8.200L5.600 10.200L5 12.600L3 12.400L1.500 10.600z" fill="#1e1e1e"/><path d="M8.800 9L11.600 8.400L13.400 10.400L12.400 12.800L9.600 13L8.200 11.200z" fill="#161616"/><path d="M6.400 14.200L8.600 14L9.600 14.900a7 7 0 0 1-3.200-.1z" fill="#444"/><circle cx="8" cy="7.900" r="7.400" fill="none" stroke="#707070" stroke-width=".6" opacity=".8"/></svg>
<span class="t" style="left:88px;top:453px;line-height:18px;height:18px;">1.belgická liga</span>
<div style="left:14px;top:471px;width:217px;height:18px;background:#f2f2f2;"></div>
<div style="left:2px;top:488px;width:11px;height:1px;background:#d8d8d8"></div>
<svg class="i" style="left:20px;top:477px;" width="5" height="7.5" viewBox="0 0 5 8" preserveAspectRatio="none"><path d="M.5 .2L4.900 4L.5 7.800L.5 5.900L2.800 4L.5 2.100z" fill="#2370dc"/></svg>
<svg class="i" style="left:33px;top:472px;" width="20" height="16" viewBox="0 0 20 16"><rect width="20" height="16" fill="#1c9a3c"/><path d="M10 2L18.500 8L10 14L1.500 8z" fill="#f7d81c"/><circle cx="10" cy="8" r="3.500" fill="#1c3f9c"/><path d="M6.700 7.300c2-.8 4.500-.3 6.600 1.400" stroke="#fff" stroke-width=".7" fill="none"/></svg>
<svg class="i" style="left:63px;top:472px;" width="16" height="16" viewBox="0 0 16 16"><defs><radialGradient id="bg1" cx="0.42" cy="0.38" r="0.62"><stop offset="0" stop-color="#ffffff"/><stop offset="0.45" stop-color="#e4e4e4"/><stop offset="0.78" stop-color="#a0a0a0"/><stop offset="1" stop-color="#484848"/></radialGradient></defs><ellipse cx="8.300" cy="14.300" rx="5.500" ry="1.500" fill="#000" opacity=".22"/><circle cx="8" cy="7.900" r="7.600" fill="url(#bg1)"/><path d="M4.300 2.600L6.800 2.200L7.600 4.200L5.600 5.400L3.800 4.400z" fill="#3a3a3a"/><path d="M10.800 2.300L13.400 3.800L13.900 6.200L11.800 6.400L10.300 4.600z" fill="#2a2a2a"/><path d="M1.600 8.800L3.600 8.200L5.600 10.200L5 12.600L3 12.400L1.500 10.600z" fill="#1e1e1e"/><path d="M8.800 9L11.600 8.400L13.400 10.400L12.400 12.800L9.600 13L8.200 11.200z" fill="#161616"/><path d="M6.400 14.200L8.600 14L9.600 14.900a7 7 0 0 1-3.200-.1z" fill="#444"/><circle cx="8" cy="7.900" r="7.400" fill="none" stroke="#707070" stroke-width=".6" opacity=".8"/></svg>
<span class="t" style="left:88px;top:471px;line-height:18px;height:18px;">1.brazilská liga</span>
<div style="left:14px;top:489px;width:217px;height:18px;background:#fff;"></div>
<div style="left:2px;top:506px;width:11px;height:1px;background:#d8d8d8"></div>
<svg class="i" style="left:20px;top:495px;" width="5" height="7.5" viewBox="0 0 5 8" preserveAspectRatio="none"><path d="M.5 .2L4.900 4L.5 7.800L.5 5.900L2.800 4L.5 2.100z" fill="#2370dc"/></svg>
<svg class="i" style="left:33px;top:490px;" width="20" height="16" viewBox="0 0 20 16"><rect width="20" height="5.400" fill="#fff"/><rect y="5.300" width="20" height="5.400" fill="#1c9a6c"/><rect y="10.600" width="20" height="5.400" fill="#d8301c"/></svg>
<svg class="i" style="left:63px;top:490px;" width="16" height="16" viewBox="0 0 16 16"><defs><radialGradient id="bg1" cx="0.42" cy="0.38" r="0.62"><stop offset="0" stop-color="#ffffff"/><stop offset="0.45" stop-color="#e4e4e4"/><stop offset="0.78" stop-color="#a0a0a0"/><stop offset="1" stop-color="#484848"/></radialGradient></defs><ellipse cx="8.300" cy="14.300" rx="5.500" ry="1.500" fill="#000" opacity=".22"/><circle cx="8" cy="7.900" r="7.600" fill="url(#bg1)"/><path d="M4.300 2.600L6.800 2.200L7.600 4.200L5.600 5.400L3.800 4.400z" fill="#3a3a3a"/><path d="M10.800 2.300L13.400 3.800L13.900 6.200L11.800 6.400L10.300 4.600z" fill="#2a2a2a"/><path d="M1.600 8.800L3.600 8.200L5.600 10.200L5 12.600L3 12.400L1.500 10.600z" fill="#1e1e1e"/><path d="M8.800 9L11.600 8.400L13.400 10.400L12.400 12.800L9.600 13L8.200 11.200z" fill="#161616"/><path d="M6.400 14.200L8.600 14L9.600 14.900a7 7 0 0 1-3.200-.1z" fill="#444"/><circle cx="8" cy="7.900" r="7.400" fill="none" stroke="#707070" stroke-width=".6" opacity=".8"/></svg>
<span class="t" style="left:88px;top:489px;line-height:18px;height:18px;">1.bulharská liga</span>
<div style="left:14px;top:507px;width:217px;height:18px;background:#f2f2f2;"></div>
<div style="left:2px;top:524px;width:11px;height:1px;background:#d8d8d8"></div>
<svg class="i" style="left:20px;top:513px;" width="5" height="7.5" viewBox="0 0 5 8" preserveAspectRatio="none"><path d="M.5 .2L4.900 4L.5 7.800L.5 5.900L2.800 4L.5 2.100z" fill="#2370dc"/></svg>
<svg class="i" style="left:33px;top:508px;" width="20" height="16" viewBox="0 0 20 16"><rect width="20" height="8" fill="#fff"/><rect y="8" width="20" height="8" fill="#d8301c"/><rect width="6.500" height="8" fill="#1c3fa8"/><path d="M3.250 1.800L3.900 3.600L5.700 3.600L4.250 4.700L4.800 6.500L3.250 5.400L1.700 6.500L2.250 4.700L.8 3.600L2.600 3.600z" fill="#fff"/></svg>
<svg class="i" style="left:63px;top:508px;" width="16" height="16" viewBox="0 0 16 16"><defs><radialGradient id="bg1" cx="0.42" cy="0.38" r="0.62"><stop offset="0" stop-color="#ffffff"/><stop offset="0.45" stop-color="#e4e4e4"/><stop offset="0.78" stop-color="#a0a0a0"/><stop offset="1" stop-color="#484848"/></radialGradient></defs><ellipse cx="8.300" cy="14.300" rx="5.500" ry="1.500" fill="#000" opacity=".22"/><circle cx="8" cy="7.900" r="7.600" fill="url(#bg1)"/><path d="M4.300 2.600L6.800 2.200L7.600 4.200L5.600 5.400L3.800 4.400z" fill="#3a3a3a"/><path d="M10.800 2.300L13.400 3.800L13.900 6.200L11.800 6.400L10.300 4.600z" fill="#2a2a2a"/><path d="M1.600 8.800L3.600 8.200L5.600 10.200L5 12.600L3 12.400L1.500 10.600z" fill="#1e1e1e"/><path d="M8.800 9L11.600 8.400L13.400 10.400L12.400 12.800L9.600 13L8.200 11.200z" fill="#161616"/><path d="M6.400 14.200L8.600 14L9.600 14.900a7 7 0 0 1-3.200-.1z" fill="#444"/><circle cx="8" cy="7.900" r="7.400" fill="none" stroke="#707070" stroke-width=".6" opacity=".8"/></svg>
<span class="t" style="left:88px;top:507px;line-height:18px;height:18px;">1.chilská liga</span>
<div style="left:14px;top:525px;width:217px;height:18px;background:#fff;"></div>
<div style="left:2px;top:542px;width:11px;height:1px;background:#d8d8d8"></div>
<svg class="i" style="left:20px;top:531px;" width="5" height="7.5" viewBox="0 0 5 8" preserveAspectRatio="none"><path d="M.5 .2L4.900 4L.5 7.800L.5 5.900L2.800 4L.5 2.100z" fill="#2370dc"/></svg>
<svg class="i" style="left:33px;top:526px;" width="20" height="16" viewBox="0 0 20 16"><rect width="20" height="5.400" fill="#f01c1c"/><rect y="5.300" width="20" height="5.400" fill="#fff"/><rect y="10.600" width="20" height="5.400" fill="#1c2f9c"/><path d="M7.500 3h5v5c0 2-5 2-5 0z" fill="#fff" stroke="#d8202c" stroke-width=".6"/><path d="M7.500 3h1.250v1.250H7.500zM10 3h1.250v1.250H10zM8.750 4.250H10V5.500H8.750zM11.250 4.250h1.250V5.500h-1.250zM7.500 5.500h1.250v1.250H7.500zM10 5.500h1.250v1.250H10zM8.750 6.750H10V8H8.750zM11.250 6.750h1.250V8h-1.250z" fill="#d8202c"/></svg>
<svg class="i" style="left:63px;top:526px;" width="16" height="16" viewBox="0 0 16 16"><defs><radialGradient id="bg1" cx="0.42" cy="0.38" r="0.62"><stop offset="0" stop-color="#ffffff"/><stop offset="0.45" stop-color="#e4e4e4"/><stop offset="0.78" stop-color="#a0a0a0"/><stop offset="1" stop-color="#484848"/></radialGradient></defs><ellipse cx="8.300" cy="14.300" rx="5.500" ry="1.500" fill="#000" opacity=".22"/><circle cx="8" cy="7.900" r="7.600" fill="url(#bg1)"/><path d="M4.300 2.600L6.800 2.200L7.600 4.200L5.600 5.400L3.800 4.400z" fill="#3a3a3a"/><path d="M10.800 2.300L13.400 3.800L13.900 6.200L11.800 6.400L10.300 4.600z" fill="#2a2a2a"/><path d="M1.600 8.800L3.600 8.200L5.600 10.200L5 12.600L3 12.400L1.500 10.600z" fill="#1e1e1e"/><path d="M8.800 9L11.600 8.400L13.400 10.400L12.400 12.800L9.600 13L8.200 11.200z" fill="#161616"/><path d="M6.400 14.200L8.600 14L9.600 14.900a7 7 0 0 1-3.200-.1z" fill="#444"/><circle cx="8" cy="7.900" r="7.400" fill="none" stroke="#707070" stroke-width=".6" opacity=".8"/></svg>
<span class="t" style="left:88px;top:525px;line-height:18px;height:18px;">1.chorvatská liga</span>
<div style="left:14px;top:543px;width:217px;height:18px;background:#f2f2f2;"></div>
<div style="left:2px;top:560px;width:11px;height:1px;background:#d8d8d8"></div>
<svg class="i" style="left:20px;top:549px;" width="5" height="7.5" viewBox="0 0 5 8" preserveAspectRatio="none"><path d="M.5 .2L4.900 4L.5 7.800L.5 5.900L2.800 4L.5 2.100z" fill="#2370dc"/></svg>
<svg class="i" style="left:33px;top:544px;" width="20" height="16" viewBox="0 0 20 16"><rect width="20" height="16" fill="#c8203c"/><path d="M6 0h2.600v16H6zM0 6.700h20v2.600H0z" fill="#fff"/></svg>
<svg class="i" style="left:63px;top:544px;" width="16" height="16" viewBox="0 0 16 16"><defs><radialGradient id="bg1" cx="0.42" cy="0.38" r="0.62"><stop offset="0" stop-color="#ffffff"/><stop offset="0.45" stop-color="#e4e4e4"/><stop offset="0.78" stop-color="#a0a0a0"/><stop offset="1" stop-color="#484848"/></radialGradient></defs><ellipse cx="8.300" cy="14.300" rx="5.500" ry="1.500" fill="#000" opacity=".22"/><circle cx="8" cy="7.900" r="7.600" fill="url(#bg1)"/><path d="M4.300 2.600L6.800 2.200L7.600 4.200L5.600 5.400L3.800 4.400z" fill="#3a3a3a"/><path d="M10.800 2.300L13.400 3.800L13.900 6.200L11.800 6.400L10.300 4.600z" fill="#2a2a2a"/><path d="M1.600 8.800L3.600 8.200L5.600 10.200L5 12.600L3 12.400L1.500 10.600z" fill="#1e1e1e"/><path d="M8.800 9L11.600 8.400L13.400 10.400L12.400 12.800L9.600 13L8.200 11.200z" fill="#161616"/><path d="M6.400 14.200L8.600 14L9.600 14.900a7 7 0 0 1-3.200-.1z" fill="#444"/><circle cx="8" cy="7.900" r="7.400" fill="none" stroke="#707070" stroke-width=".6" opacity=".8"/></svg>
<span class="t" style="left:88px;top:543px;line-height:18px;height:18px;">1.dánská liga</span>
<div style="left:14px;top:561px;width:217px;height:18px;background:#fff;"></div>
<div style="left:2px;top:578px;width:11px;height:1px;background:#d8d8d8"></div>
<svg class="i" style="left:20px;top:567px;" width="5" height="7.5" viewBox="0 0 5 8" preserveAspectRatio="none"><path d="M.5 .2L4.900 4L.5 7.800L.5 5.900L2.800 4L.5 2.100z" fill="#2370dc"/></svg>
<svg class="i" style="left:33px;top:562px;" width="20" height="16" viewBox="0 0 20 16"><rect width="6" height="16" fill="#0c1c8c"/><rect x="6" width="8" height="16" fill="#fff"/><rect x="14" width="6" height="16" fill="#ee2436"/></svg>
<svg class="i" style="left:63px;top:562px;" width="16" height="16" viewBox="0 0 16 16"><defs><radialGradient id="bg1" cx="0.42" cy="0.38" r="0.62"><stop offset="0" stop-color="#ffffff"/><stop offset="0.45" stop-color="#e4e4e4"/><stop offset="0.78" stop-color="#a0a0a0"/><stop offset="1" stop-color="#484848"/></radialGradient></defs><ellipse cx="8.300" cy="14.300" rx="5.500" ry="1.500" fill="#000" opacity=".22"/><circle cx="8" cy="7.900" r="7.600" fill="url(#bg1)"/><path d="M4.300 2.600L6.800 2.200L7.600 4.200L5.600 5.400L3.800 4.400z" fill="#3a3a3a"/><path d="M10.800 2.300L13.400 3.800L13.900 6.200L11.800 6.400L10.300 4.600z" fill="#2a2a2a"/><path d="M1.600 8.800L3.600 8.200L5.600 10.200L5 12.600L3 12.400L1.500 10.600z" fill="#1e1e1e"/><path d="M8.800 9L11.600 8.400L13.400 10.400L12.400 12.800L9.600 13L8.200 11.200z" fill="#161616"/><path d="M6.400 14.200L8.600 14L9.600 14.900a7 7 0 0 1-3.200-.1z" fill="#444"/><circle cx="8" cy="7.900" r="7.400" fill="none" stroke="#707070" stroke-width=".6" opacity=".8"/></svg>
<span class="t" style="left:88px;top:561px;line-height:18px;height:18px;">1.francouzská liga</span>
<div style="left:14px;top:579px;width:217px;height:18px;background:#f2f2f2;"></div>
<div style="left:2px;top:596px;width:11px;height:1px;background:#d8d8d8"></div>
<svg class="i" style="left:20px;top:585px;" width="5" height="7.5" viewBox="0 0 5 8" preserveAspectRatio="none"><path d="M.5 .2L4.900 4L.5 7.800L.5 5.900L2.800 4L.5 2.100z" fill="#2370dc"/></svg>
<svg class="i" style="left:33px;top:580px;" width="20" height="16" viewBox="0 0 20 16"><rect width="6" height="16" fill="#1c9a5c"/><rect x="6" width="8" height="16" fill="#fff"/><rect x="14" width="6" height="16" fill="#f5883a"/></svg>
<svg class="i" style="left:63px;top:580px;" width="16" height="16" viewBox="0 0 16 16"><defs><radialGradient id="bg1" cx="0.42" cy="0.38" r="0.62"><stop offset="0" stop-color="#ffffff"/><stop offset="0.45" stop-color="#e4e4e4"/><stop offset="0.78" stop-color="#a0a0a0"/><stop offset="1" stop-color="#484848"/></radialGradient></defs><ellipse cx="8.300" cy="14.300" rx="5.500" ry="1.500" fill="#000" opacity=".22"/><circle cx="8" cy="7.900" r="7.600" fill="url(#bg1)"/><path d="M4.300 2.600L6.800 2.200L7.600 4.200L5.600 5.400L3.800 4.400z" fill="#3a3a3a"/><path d="M10.800 2.300L13.400 3.800L13.900 6.200L11.800 6.400L10.300 4.600z" fill="#2a2a2a"/><path d="M1.600 8.800L3.600 8.200L5.600 10.200L5 12.600L3 12.400L1.500 10.600z" fill="#1e1e1e"/><path d="M8.800 9L11.600 8.400L13.400 10.400L12.400 12.800L9.600 13L8.200 11.200z" fill="#161616"/><path d="M6.400 14.200L8.600 14L9.600 14.900a7 7 0 0 1-3.200-.1z" fill="#444"/><circle cx="8" cy="7.900" r="7.400" fill="none" stroke="#707070" stroke-width=".6" opacity=".8"/></svg>
<span class="t" style="left:88px;top:579px;line-height:18px;height:18px;">1.irská liga</span>
<div style="left:14px;top:597px;width:217px;height:18px;background:#fff;"></div>
<div style="left:2px;top:614px;width:11px;height:1px;background:#d8d8d8"></div>
<svg class="i" style="left:20px;top:603px;" width="5" height="7.5" viewBox="0 0 5 8" preserveAspectRatio="none"><path d="M.5 .2L4.900 4L.5 7.800L.5 5.900L2.800 4L.5 2.100z" fill="#2370dc"/></svg>
<svg class="i" style="left:33px;top:598px;" width="20" height="16" viewBox="0 0 20 16"><rect width="6" height="16" fill="#0c9246"/><rect x="6" width="8" height="16" fill="#fff"/><rect x="14" width="6" height="16" fill="#ce2b37"/></svg>
<svg class="i" style="left:63px;top:598px;" width="16" height="16" viewBox="0 0 16 16"><defs><radialGradient id="bg1" cx="0.42" cy="0.38" r="0.62"><stop offset="0" stop-color="#ffffff"/><stop offset="0.45" stop-color="#e4e4e4"/><stop offset="0.78" stop-color="#a0a0a0"/><stop offset="1" stop-color="#484848"/></radialGradient></defs><ellipse cx="8.300" cy="14.300" rx="5.500" ry="1.500" fill="#000" opacity=".22"/><circle cx="8" cy="7.900" r="7.600" fill="url(#bg1)"/><path d="M4.300 2.600L6.800 2.200L7.600 4.200L5.600 5.400L3.800 4.400z" fill="#3a3a3a"/><path d="M10.800 2.300L13.400 3.800L13.900 6.200L11.800 6.400L10.300 4.600z" fill="#2a2a2a"/><path d="M1.600 8.800L3.600 8.200L5.600 10.200L5 12.600L3 12.400L1.500 10.600z" fill="#1e1e1e"/><path d="M8.800 9L11.600 8.400L13.400 10.400L12.400 12.800L9.600 13L8.200 11.200z" fill="#161616"/><path d="M6.400 14.200L8.600 14L9.600 14.900a7 7 0 0 1-3.200-.1z" fill="#444"/><circle cx="8" cy="7.900" r="7.400" fill="none" stroke="#707070" stroke-width=".6" opacity=".8"/></svg>
<span class="t" style="left:88px;top:597px;line-height:18px;height:18px;">1.italská liga</span>
<div style="left:14px;top:615px;width:217px;height:18px;background:#f2f2f2;"></div>
<div style="left:2px;top:632px;width:11px;height:1px;background:#d8d8d8"></div>
<svg class="i" style="left:20px;top:621px;" width="5" height="7.5" viewBox="0 0 5 8" preserveAspectRatio="none"><path d="M.5 .2L4.900 4L.5 7.800L.5 5.900L2.800 4L.5 2.100z" fill="#2370dc"/></svg>
<svg class="i" style="left:33px;top:616px;" width="20" height="16" viewBox="0 0 20 16"><rect width="20" height="16" fill="#fff"/><rect y="1.500" width="20" height="2.300" fill="#1c3fa8"/><rect y="12.200" width="20" height="2.300" fill="#1c3fa8"/><path d="M10 5.300L12.300 9.300H7.700zM10 10.700L7.700 6.700H12.300z" fill="none" stroke="#1c3fa8" stroke-width=".8"/></svg>
<svg class="i" style="left:63px;top:616px;" width="16" height="16" viewBox="0 0 16 16"><defs><radialGradient id="bg1" cx="0.42" cy="0.38" r="0.62"><stop offset="0" stop-color="#ffffff"/><stop offset="0.45" stop-color="#e4e4e4"/><stop offset="0.78" stop-color="#a0a0a0"/><stop offset="1" stop-color="#484848"/></radialGradient></defs><ellipse cx="8.300" cy="14.300" rx="5.500" ry="1.500" fill="#000" opacity=".22"/><circle cx="8" cy="7.900" r="7.600" fill="url(#bg1)"/><path d="M4.300 2.600L6.800 2.200L7.600 4.200L5.600 5.400L3.800 4.400z" fill="#3a3a3a"/><path d="M10.800 2.300L13.400 3.800L13.900 6.200L11.800 6.400L10.300 4.600z" fill="#2a2a2a"/><path d="M1.600 8.800L3.600 8.200L5.600 10.200L5 12.600L3 12.400L1.500 10.600z" fill="#1e1e1e"/><path d="M8.800 9L11.600 8.400L13.400 10.400L12.400 12.800L9.600 13L8.200 11.200z" fill="#161616"/><path d="M6.400 14.200L8.600 14L9.600 14.900a7 7 0 0 1-3.200-.1z" fill="#444"/><circle cx="8" cy="7.900" r="7.400" fill="none" stroke="#707070" stroke-width=".6" opacity=".8"/></svg>
<span class="t" style="left:88px;top:615px;line-height:18px;height:18px;">1.izraelská liga</span>
<div style="left:14px;top:633px;width:217px;height:18px;background:#fff;"></div>
<div style="left:2px;top:650px;width:11px;height:1px;background:#d8d8d8"></div>
<svg class="i" style="left:20px;top:639px;" width="5" height="7.5" viewBox="0 0 5 8" preserveAspectRatio="none"><path d="M.5 .2L4.900 4L.5 7.800L.5 5.900L2.800 4L.5 2.100z" fill="#2370dc"/></svg>
<svg class="i" style="left:33px;top:634px;" width="20" height="16" viewBox="0 0 20 16"><rect width="20" height="16" fill="#fff"/><circle cx="10" cy="8" r="4.800" fill="#c8102e"/></svg>
<svg class="i" style="left:63px;top:634px;" width="16" height="16" viewBox="0 0 16 16"><defs><radialGradient id="bg1" cx="0.42" cy="0.38" r="0.62"><stop offset="0" stop-color="#ffffff"/><stop offset="0.45" stop-color="#e4e4e4"/><stop offset="0.78" stop-color="#a0a0a0"/><stop offset="1" stop-color="#484848"/></radialGradient></defs><ellipse cx="8.300" cy="14.300" rx="5.500" ry="1.500" fill="#000" opacity=".22"/><circle cx="8" cy="7.900" r="7.600" fill="url(#bg1)"/><path d="M4.300 2.600L6.800 2.200L7.600 4.200L5.600 5.400L3.800 4.400z" fill="#3a3a3a"/><path d="M10.800 2.300L13.400 3.800L13.900 6.200L11.800 6.400L10.300 4.600z" fill="#2a2a2a"/><path d="M1.600 8.800L3.600 8.200L5.600 10.200L5 12.600L3 12.400L1.500 10.600z" fill="#1e1e1e"/><path d="M8.800 9L11.600 8.400L13.400 10.400L12.400 12.800L9.600 13L8.200 11.200z" fill="#161616"/><path d="M6.400 14.200L8.600 14L9.600 14.900a7 7 0 0 1-3.200-.1z" fill="#444"/><circle cx="8" cy="7.900" r="7.400" fill="none" stroke="#707070" stroke-width=".6" opacity=".8"/></svg>
<span class="t" style="left:88px;top:633px;line-height:18px;height:18px;">1.japonská liga</span>
<div style="left:14px;top:651px;width:217px;height:18px;background:#f2f2f2;"></div>
<div style="left:2px;top:668px;width:11px;height:1px;background:#d8d8d8"></div>
<svg class="i" style="left:20px;top:657px;" width="5" height="7.5" viewBox="0 0 5 8" preserveAspectRatio="none"><path d="M.5 .2L4.900 4L.5 7.800L.5 5.900L2.800 4L.5 2.100z" fill="#2370dc"/></svg>
<svg class="i" style="left:33px;top:652px;" width="20" height="16" viewBox="0 0 20 16"><rect width="20" height="8" fill="#e8283a"/><rect y="8" width="20" height="8" fill="#1c2f9c"/><path d="M0 0L10 6.500H20v3H10L0 16" fill="none" stroke="#fff" stroke-width="5.500"/><path d="M0 0L10 8H20M10 8L0 16" fill="none" stroke="#1c8a4c" stroke-width="3.200"/><path d="M0 2.800L6.500 8L0 13.200z" fill="#f7c81c"/><path d="M0 4.500L4.300 8L0 11.500z" fill="#111"/></svg>
<svg class="i" style="left:63px;top:652px;" width="16" height="16" viewBox="0 0 16 16"><defs><radialGradient id="bg1" cx="0.42" cy="0.38" r="0.62"><stop offset="0" stop-color="#ffffff"/><stop offset="0.45" stop-color="#e4e4e4"/><stop offset="0.78" stop-color="#a0a0a0"/><stop offset="1" stop-color="#484848"/></radialGradient></defs><ellipse cx="8.300" cy="14.300" rx="5.500" ry="1.500" fill="#000" opacity=".22"/><circle cx="8" cy="7.900" r="7.600" fill="url(#bg1)"/><path d="M4.300 2.600L6.800 2.200L7.600 4.200L5.600 5.400L3.800 4.400z" fill="#3a3a3a"/><path d="M10.800 2.300L13.400 3.800L13.900 6.200L11.800 6.400L10.300 4.600z" fill="#2a2a2a"/><path d="M1.600 8.800L3.600 8.200L5.600 10.200L5 12.600L3 12.400L1.500 10.600z" fill="#1e1e1e"/><path d="M8.800 9L11.600 8.400L13.400 10.400L12.400 12.800L9.600 13L8.200 11.200z" fill="#161616"/><path d="M6.400 14.200L8.600 14L9.600 14.900a7 7 0 0 1-3.200-.1z" fill="#444"/><circle cx="8" cy="7.900" r="7.400" fill="none" stroke="#707070" stroke-width=".6" opacity=".8"/></svg>
<span class="t" style="left:88px;top:651px;line-height:18px;height:18px;">1.jihoafrická liga</span>
<div style="left:14px;top:669px;width:217px;height:18px;background:#fff;"></div>
<div style="left:2px;top:686px;width:11px;height:1px;background:#d8d8d8"></div>
<svg class="i" style="left:20px;top:675px;" width="5" height="7.5" viewBox="0 0 5 8" preserveAspectRatio="none"><path d="M.5 .2L4.900 4L.5 7.800L.5 5.900L2.800 4L.5 2.100z" fill="#2370dc"/></svg>
<svg class="i" style="left:33px;top:670px;" width="20" height="16" viewBox="0 0 20 16"><rect width="20" height="8" fill="#fcd116"/><rect y="8" width="20" height="4" fill="#1c3f8c"/><rect y="12" width="20" height="4" fill="#d8202c"/></svg>
<svg class="i" style="left:63px;top:670px;" width="16" height="16" viewBox="0 0 16 16"><defs><radialGradient id="bg1" cx="0.42" cy="0.38" r="0.62"><stop offset="0" stop-color="#ffffff"/><stop offset="0.45" stop-color="#e4e4e4"/><stop offset="0.78" stop-color="#a0a0a0"/><stop offset="1" stop-color="#484848"/></radialGradient></defs><ellipse cx="8.300" cy="14.300" rx="5.500" ry="1.500" fill="#000" opacity=".22"/><circle cx="8" cy="7.900" r="7.600" fill="url(#bg1)"/><path d="M4.300 2.600L6.800 2.200L7.600 4.200L5.600 5.400L3.800 4.400z" fill="#3a3a3a"/><path d="M10.800 2.300L13.400 3.800L13.900 6.200L11.800 6.400L10.300 4.600z" fill="#2a2a2a"/><path d="M1.600 8.800L3.600 8.200L5.600 10.200L5 12.600L3 12.400L1.500 10.600z" fill="#1e1e1e"/><path d="M8.800 9L11.600 8.400L13.400 10.400L12.400 12.800L9.600 13L8.200 11.200z" fill="#161616"/><path d="M6.400 14.200L8.600 14L9.600 14.900a7 7 0 0 1-3.200-.1z" fill="#444"/><circle cx="8" cy="7.900" r="7.400" fill="none" stroke="#707070" stroke-width=".6" opacity=".8"/></svg>
<span class="t" style="left:88px;top:669px;line-height:18px;height:18px;">1.kolumbijská liga</span>
<div style="left:2px;top:674px;width:246px;height:19px;background:#fff;"></div>
<div style="left:154px;top:674px;width:77px;height:19px;background:#f0f0f0;"></div>
<div style="left:231px;top:674px;width:17px;height:19px;background:#f0f0f0;"></div>
<svg class="i" style="left:160px;top:680px;" width="5" height="8" viewBox="0 0 5 8"><path d="M4.500 .5L.5 4L4.500 7.500z" fill="#d0d0d0"/></svg>
<svg class="i" style="left:219px;top:680px;" width="5" height="8" viewBox="0 0 5 8"><path d="M.5 .5L4.500 4L.5 7.500z" fill="#d0d0d0"/></svg>
<svg class="i" style="left:5px;top:678px;" width="10" height="10" viewBox="2 3 12 11" preserveAspectRatio="none"><path d="M2 3h12L9.500 8.500V14L6.500 12V8.500z" fill="#444"/></svg>
<svg class="i" style="left:20px;top:676px;" width="14" height="14" viewBox="0 0 16 16" preserveAspectRatio="none"><rect x=".5" y="1" width="15" height="14" fill="#fff" stroke="#6e84b8" stroke-width="1"/><rect x="1" y="1.500" width="14" height="5" fill="#9ccc4a" stroke="#5c9a1c" stroke-width=".8"/></svg>
<svg class="i" style="left:36px;top:676px;" width="15" height="15" viewBox="0 0 16 16" preserveAspectRatio="none"><rect x="3" y=".5" width="12.500" height="14" fill="#eef4fc" stroke="#6e84b8" stroke-width="1"/><path d="M5 2.500L6.300 5.500L9.500 6L7.200 8L7.800 11L5 9.500L2.200 11L2.800 8L.5 6L3.700 5.500z" fill="#f5b83a" stroke="#c9842a" stroke-width=".7"/><path d="M8 9L14.500 15.500" stroke="#333" stroke-width="2"/></svg>
<svg class="i" style="left:54px;top:676px;" width="14" height="14" viewBox="0 0 16 16" preserveAspectRatio="none"><rect x=".5" y="1" width="15" height="14" fill="#fff" stroke="#6e84b8" stroke-width="1"/><rect x="1" y="9.500" width="14" height="5" fill="#9ccc4a" stroke="#5c9a1c" stroke-width=".8"/></svg>
<svg class="i" style="left:70px;top:675px;" width="15" height="15" viewBox="0 0 16 16" preserveAspectRatio="none"><path d="M6.75 0.71L9.25 0.71L9.57 2.94L10.47 3.31L12.27 1.96L14.04 3.73L12.69 5.53L13.06 6.43L15.29 6.75L15.29 9.25L13.06 9.57L12.69 10.47L14.04 12.27L12.27 14.04L10.47 12.69L9.57 13.06L9.25 15.29L6.75 15.29L6.43 13.06L5.53 12.69L3.73 14.04L1.96 12.27L3.31 10.47L2.94 9.57L0.71 9.25L0.71 6.75L2.94 6.43L3.31 5.53L1.96 3.73L3.73 1.96L5.53 3.31L6.43 2.94z" fill="#dfe7f5" stroke="#5c6f9c" stroke-width="1.100" stroke-linejoin="round"/><circle cx="8" cy="8" r="2.300" fill="#fff" stroke="#5c6f9c" stroke-width="1.100"/></svg>
<svg class="i" style="left:88px;top:675px;" width="15" height="15" viewBox="0 0 16 16" preserveAspectRatio="none"><path d="M1 1.500h11L8 6.500V12L5 10.500V6.500z" fill="#e8e8e8" stroke="#666" stroke-width="1"/><ellipse cx="6.500" cy="1.800" rx="5.500" ry="1.300" fill="#f8f8f8" stroke="#666" stroke-width=".8"/><rect x="9" y="8" width="6" height="7.500" rx="1" fill="#f3a646" stroke="#c9741a" stroke-width="1"/></svg>
<div style="left:253px;top:381px;width:2px;height:2px;background:#555;"></div>
<div style="left:253px;top:385px;width:2px;height:2px;background:#555;"></div>
<div style="left:253px;top:389px;width:2px;height:2px;background:#555;"></div>
<div style="left:260px;top:80px;width:771px;height:584px;background:#f0f0f0;border:1px solid #ababab;border-top:none;"></div>
<div style="left:259px;top:79px;width:2px;height:615px;background:#b4b4b4"></div>
<svg class="i" style="left:265px;top:87px;" width="16" height="16" viewBox="0 0 16 16"><defs><linearGradient id="gg" x1="0" y1="0" x2="0" y2="1"><stop offset="0" stop-color="#a4d858"/><stop offset=".5" stop-color="#7cba2c"/><stop offset="1" stop-color="#5c9a18"/></linearGradient></defs><circle cx="8" cy="8" r="7.400" fill="url(#gg)" stroke="#4f8a14" stroke-width="1"/><path d="M2.600 5.800a5.800 5.800 0 0 1 10.800 0a9 4 0 0 0-10.800 0z" fill="#d4f0a0" opacity=".55"/><path d="M2.600 8L7.800 3.200V6H13V10H7.800V12.800z" fill="#fff" stroke="#3f6d10" stroke-width=".9" stroke-linejoin="round"/></svg>
<div style="left:282px;top:84px;width:84px;height:21px;background:#fff;border:1px solid #ababab;"></div>
<span class="t" style="left:284px;top:84px;line-height:21px;height:21px;transform:scaleX(0.9469);transform-origin:0 0;">09.02.2026</span>
<svg class="i" style="left:352px;top:93px;" width="7" height="4" viewBox="0 0 7 4"><path d="M.3 0h6.400L3.500 3.200z" fill="#727272"/></svg>
<svg class="i" style="left:369px;top:87px;" width="16" height="16" viewBox="0 0 16 16"><defs><linearGradient id="gg" x1="0" y1="0" x2="0" y2="1"><stop offset="0" stop-color="#a4d858"/><stop offset=".5" stop-color="#7cba2c"/><stop offset="1" stop-color="#5c9a18"/></linearGradient></defs><circle cx="8" cy="8" r="7.400" fill="url(#gg)" stroke="#4f8a14" stroke-width="1"/><path d="M2.600 5.800a5.800 5.800 0 0 1 10.800 0a9 4 0 0 0-10.800 0z" fill="#d4f0a0" opacity=".55"/><path d="M13.400 8L8.200 3.200V6H3V10H8.200V12.800z" fill="#fff" stroke="#3f6d10" stroke-width=".9" stroke-linejoin="round"/></svg>
<span class="t" style="left:390px;top:84px;line-height:21px;height:21px;">-</span>
<svg class="i" style="left:403px;top:87px;" width="16" height="16" viewBox="0 0 16 16"><defs><linearGradient id="gg" x1="0" y1="0" x2="0" y2="1"><stop offset="0" stop-color="#a4d858"/><stop offset=".5" stop-color="#7cba2c"/><stop offset="1" stop-color="#5c9a18"/></linearGradient></defs><circle cx="8" cy="8" r="7.400" fill="url(#gg)" stroke="#4f8a14" stroke-width="1"/><path d="M2.600 5.800a5.800 5.800 0 0 1 10.800 0a9 4 0 0 0-10.800 0z" fill="#d4f0a0" opacity=".55"/><path d="M2.600 8L7.800 3.200V6H13V10H7.800V12.800z" fill="#fff" stroke="#3f6d10" stroke-width=".9" stroke-linejoin="round"/></svg>
<div style="left:420px;top:84px;width:84px;height:21px;background:#fff;border:1px solid #ababab;"></div>
<span class="t" style="left:422px;top:84px;line-height:21px;height:21px;transform:scaleX(0.9469);transform-origin:0 0;">16.02.2026</span>
<svg class="i" style="left:490px;top:93px;" width="7" height="4" viewBox="0 0 7 4"><path d="M.3 0h6.400L3.500 3.200z" fill="#727272"/></svg>
<svg class="i" style="left:505px;top:87px;" width="16" height="16" viewBox="0 0 16 16"><defs><linearGradient id="gg" x1="0" y1="0" x2="0" y2="1"><stop offset="0" stop-color="#a4d858"/><stop offset=".5" stop-color="#7cba2c"/><stop offset="1" stop-color="#5c9a18"/></linearGradient></defs><circle cx="8" cy="8" r="7.400" fill="url(#gg)" stroke="#4f8a14" stroke-width="1"/><path d="M2.600 5.800a5.800 5.800 0 0 1 10.800 0a9 4 0 0 0-10.800 0z" fill="#d4f0a0" opacity=".55"/><path d="M13.400 8L8.200 3.200V6H3V10H8.200V12.800z" fill="#fff" stroke="#3f6d10" stroke-width=".9" stroke-linejoin="round"/></svg>
<svg class="i" style="left:531px;top:87px;" width="16" height="16" viewBox="0 0 16 16"><rect x=".5" y="1.500" width="15" height="13" fill="#fff" stroke="#6e84b8" stroke-width="1"/><path d="M.5 5h15M.5 11h15M4 1.500v13M12 1.500v13" stroke="#b9c4e0" stroke-width=".8"/><path d="M3.500 7h5V4.800L13 8L8.500 11.200V9h-5z" fill="#6fb32c" stroke="#3f7d12" stroke-width=".8" stroke-linejoin="round"/></svg>
<div style="left:551px;top:84px;width:129px;height:21px;background:#fff;border:1px solid #ababab;"></div>
<span class="t" style="left:552px;top:84px;line-height:21px;height:21px;width:111px;text-align:center;">- kurz na zápas -</span>
<svg class="i" style="left:667px;top:93px;" width="7" height="4" viewBox="0 0 7 4"><path d="M.3 0h6.400L3.500 3.200z" fill="#727272"/></svg>
<span class="t" style="left:760px;top:85px;line-height:21px;height:21px;transform:scaleX(0.9817);transform-origin:0 0;">Celkem 10 zápasů</span>
<svg class="i" style="left:266.5px;top:113.5px;" width="15" height="15" viewBox="0 0 16 16" preserveAspectRatio="none"><rect x=".5" y=".8" width="15" height="14.700" fill="#f4f6fc" stroke="#7a88b8" stroke-width="1"/><rect x=".5" y=".8" width="15" height="4" fill="#d8524a" stroke="#b83a34" stroke-width=".6"/><text x="8" y="13.500" font-family="Liberation Sans, sans-serif" font-size="9.500" font-weight="bold" fill="#34447a" text-anchor="middle">1</text></svg>
<svg class="i" style="left:289px;top:113px;" width="15" height="15" viewBox="0 0 16 16" preserveAspectRatio="none"><rect x=".5" y=".5" width="15" height="15" fill="#eef2fb" stroke="#6e84b8" stroke-width="1"/><path d="M8 2L10 4.500H6zM8 14L10 11.500H6zM2 8L4.500 6V10zM14 8L11.500 6V10z" fill="#26365e"/><path d="M8 4v8M4 8h8" stroke="#26365e" stroke-width="1" stroke-dasharray="1.500 1"/></svg>
<div style="left:313px;top:110px;width:18px;height:20px;background:#cfe3f8;border:1px solid #a8c8ee;"></div>
<svg class="i" style="left:315px;top:113px;" width="15" height="15" viewBox="0 0 16 16" preserveAspectRatio="none"><rect x="2.300" y="2.500" width="2.400" height="11" fill="#b4d6f6" stroke="#3a7ccc" stroke-width="1"/><path d="M14.500 2.500L6 8L14.500 13.500z" fill="#9cc8f0" stroke="#3a7ccc" stroke-width="1.200" stroke-linejoin="round"/></svg>
<div style="left:332px;top:110px;width:51px;height:21px;background:#fff;border:1px solid #ababab;"></div>
<span class="t" style="left:334px;top:110px;line-height:21px;height:21px;transform:scaleX(0.928);transform-origin:0 0;">00:00</span>
<svg class="i" style="left:369px;top:112px;" width="8" height="17" viewBox="0 0 8 16" preserveAspectRatio="none"><path d="M1 6L4 2L7 6zM1 10.500L4 14.500L7 10.500z" fill="#7a7a7a"/></svg>
<span class="t" style="left:386px;top:110px;line-height:21px;height:21px;">-</span>
<div style="left:394px;top:110px;width:51px;height:21px;background:#fff;border:1px solid #ababab;"></div>
<span class="t" style="left:396px;top:110px;line-height:21px;height:21px;transform:scaleX(0.928);transform-origin:0 0;">07:00</span>
<svg class="i" style="left:431px;top:112px;" width="8" height="17" viewBox="0 0 8 16" preserveAspectRatio="none"><path d="M1 6L4 2L7 6zM1 10.500L4 14.500L7 10.500z" fill="#7a7a7a"/></svg>
<svg class="i" style="left:446px;top:113px;" width="15" height="15" viewBox="0 0 16 16" preserveAspectRatio="none"><rect x="11.300" y="2.500" width="2.400" height="11" fill="#b4d6f6" stroke="#3a7ccc" stroke-width="1"/><path d="M1.500 2.500L10 8L1.500 13.500z" fill="#9cc8f0" stroke="#3a7ccc" stroke-width="1.200" stroke-linejoin="round"/></svg>
<svg class="i" style="left:470px;top:113px;" width="16" height="16" viewBox="0 0 16 16"><defs><linearGradient id="gg" x1="0" y1="0" x2="0" y2="1"><stop offset="0" stop-color="#a4d858"/><stop offset=".5" stop-color="#7cba2c"/><stop offset="1" stop-color="#5c9a18"/></linearGradient></defs><circle cx="8" cy="8" r="7.400" fill="url(#gg)" stroke="#4f8a14" stroke-width="1"/><path d="M2.600 5.800a5.800 5.800 0 0 1 10.800 0a9 4 0 0 0-10.800 0z" fill="#d4f0a0" opacity=".55"/><path d="M4.300 8.300L7 11L11.800 5.300" fill="none" stroke="#3f6d10" stroke-width="3.200" stroke-linecap="round" stroke-linejoin="round"/><path d="M4.300 8.300L7 11L11.800 5.300" fill="none" stroke="#fff" stroke-width="1.700" stroke-linecap="round" stroke-linejoin="round"/></svg>
<svg class="i" style="left:532.5px;top:113px;" width="13" height="15" viewBox="0 0 16 16" preserveAspectRatio="none"><rect x="1" y="1" width="14" height="14.500" rx=".8" fill="#86c03c" stroke="#5a9a1c" stroke-width="1.200"/><rect x="2.300" y="1.800" width="11.400" height="1.700" fill="#f4fbe8"/><rect x="2.300" y="4" width="11.400" height="10.300" fill="#9ad04c"/><text x="8" y="13.300" font-family="Liberation Sans, sans-serif" font-size="10.500" font-weight="bold" fill="#2c6a0c" text-anchor="middle">$</text></svg>
<div style="left:551px;top:110px;width:129px;height:21px;background:#fff;border:1px solid #ababab;"></div>
<span class="t" style="left:552px;top:110px;line-height:21px;height:21px;width:111px;text-align:center;">Soutěž</span>
<svg class="i" style="left:667px;top:119px;" width="7" height="4" viewBox="0 0 7 4"><path d="M.3 0h6.400L3.500 3.200z" fill="#727272"/></svg>
<svg class="i" style="left:691px;top:113px;" width="16" height="16" viewBox="0 0 16 16"><rect x="8.500" y="2" width="7" height="12" fill="#fff" stroke="#6e84b8" stroke-width="1"/><path d="M8.500 6h7M8.500 10h7M12 2v12" stroke="#6e84b8" stroke-width=".8"/><rect x="1" y="5" width="6.500" height="6.500" fill="#6fb32c" stroke="#3f7d12" stroke-width=".8"/><path d="M4.250 6.300v4M2.300 8.250h4" stroke="#fff" stroke-width="1.300"/><path d="M5 2.500H3v2M5 14H3v-2" stroke="#26365e" stroke-width="1" fill="none"/></svg>
<svg class="i" style="left:723px;top:113px;" width="16" height="16" viewBox="0 0 16 16"><rect x="1" y="9.500" width="2" height="5.500" fill="#f8c060" stroke="#d8841c" stroke-width=".7"/><rect x="5" y="6.500" width="2" height="8.500" fill="#98d458" stroke="#4a9a18" stroke-width=".7"/><rect x="9" y="1.500" width="2" height="13.500" fill="#78b0f0" stroke="#2c6bb8" stroke-width=".7"/><rect x="13" y="6" width="2" height="9" fill="#f07860" stroke="#c0301c" stroke-width=".7"/></svg>
<svg class="i" style="left:756px;top:113px;" width="16" height="16" viewBox="0 0 16 16"><rect x=".5" y="2" width="15" height="12" fill="#fff" stroke="#6e84b8" stroke-width="1"/><path d="M2.500 10.500L5.500 7L8 9.500L10.500 6L13.500 8" fill="none" stroke="#d83030" stroke-width="1.500" stroke-linejoin="round"/></svg>
<span class="t" style="left:776px;top:111px;line-height:21px;height:21px;transform:scaleX(1.015);transform-origin:0 0;">Statistiky</span>
<svg class="i" style="left:848px;top:113px;" width="16" height="16" viewBox="0 0 16 16"><path d="M2 3.500c0-2 8.500-2 8.500 0v9c0 2-8.500 2-8.500 0z" fill="#fbe6b8" stroke="#c9922e" stroke-width="1"/><ellipse cx="6.250" cy="3.500" rx="4.250" ry="1.500" fill="#fff4d6" stroke="#c9922e" stroke-width=".8"/><path d="M8 6.500L13.500 12L11 12.300L12.500 15.200L11.300 15.800L9.900 12.900L8 14.500z" fill="#fff" stroke="#26365e" stroke-width=".9" stroke-linejoin="round"/></svg>
<span class="t" style="left:868px;top:111px;line-height:21px;height:21px;transform:scaleX(1.0486);transform-origin:0 0;">Archiv</span>
<svg class="i" style="left:932px;top:112px;" width="16" height="16" viewBox="0 0 16 16"><circle cx="6" cy="5.800" r="5" fill="#f3a646" stroke="#c9741a" stroke-width="1"/><text x="6" y="8.700" font-family="Liberation Sans, sans-serif" font-size="8" fill="#b35c08" text-anchor="middle">€</text><circle cx="10.800" cy="10.800" r="4.700" fill="#6fb32c" stroke="#4a8518" stroke-width="1"/><text x="10.800" y="13.700" font-family="Liberation Sans, sans-serif" font-size="8" font-weight="bold" fill="#f0fadc" text-anchor="middle">$</text></svg>
<svg class="i" style="left:980px;top:113px;" width="16" height="16" viewBox="0 0 16 16"><circle cx="8" cy="8" r="7.400" fill="#4d90dc" stroke="#2c6bb8" stroke-width="1"/><path d="M2.300 6.200a6 6 0 0 1 11.400 0a9 4.500 0 0 0-11.400 0z" fill="#9cc6f2" opacity=".8"/><path d="M8 4v8M4 8h8" stroke="#2c5f9e" stroke-width="3.600" stroke-linecap="round"/><path d="M8 4v8M4 8h8" stroke="#fff" stroke-width="1.900" stroke-linecap="round"/></svg>
<div style="left:261px;top:136px;width:1px;height:24px;background:#c4c4c4"></div>
<div style="left:325px;top:136px;width:706px;height:1px;background:#c4c4c4"></div>
<div style="left:259px;top:160px;width:772px;height:2px;background:#a8a8a8"></div>
<div style="left:324px;top:136px;width:67px;height:23px;background:#dedede;border:1px solid #b4b4b4;"></div>
<svg class="i" style="left:329px;top:139px;" width="16" height="16" viewBox="0 0 16 16"><defs><linearGradient id="rg" x1="0" y1="0" x2="0" y2="1"><stop offset="0" stop-color="#ee7264"/><stop offset=".45" stop-color="#d8303a"/><stop offset="1" stop-color="#b01820"/></linearGradient></defs><circle cx="8" cy="8" r="7.400" fill="url(#rg)" stroke="#a81c22" stroke-width="1"/><path d="M5.200 5.200L10.800 10.800M10.800 5.200L5.200 10.800" stroke="#9c1418" stroke-width="3.600" stroke-linecap="round" opacity=".5"/><path d="M5.200 5.200L10.800 10.800M10.800 5.200L5.200 10.800" stroke="#eef2fa" stroke-width="2.500" stroke-linecap="round"/></svg>
<span class="t" style="left:351px;top:137px;line-height:20px;height:20px;">Detaily</span>
<div style="left:392px;top:136px;width:131px;height:23px;background:#dedede;border:1px solid #b4b4b4;"></div>
<svg class="i" style="left:397px;top:139px;" width="16" height="16" viewBox="0 0 16 16"><defs><linearGradient id="rg" x1="0" y1="0" x2="0" y2="1"><stop offset="0" stop-color="#ee7264"/><stop offset=".45" stop-color="#d8303a"/><stop offset="1" stop-color="#b01820"/></linearGradient></defs><circle cx="8" cy="8" r="7.400" fill="url(#rg)" stroke="#a81c22" stroke-width="1"/><path d="M5.200 5.200L10.800 10.800M10.800 5.200L5.200 10.800" stroke="#9c1418" stroke-width="3.600" stroke-linecap="round" opacity=".5"/><path d="M5.200 5.200L10.800 10.800M10.800 5.200L5.200 10.800" stroke="#eef2fa" stroke-width="2.500" stroke-linecap="round"/></svg>
<span class="t" style="left:419px;top:137px;line-height:20px;height:20px;">Sloupce a statistiky</span>
<div style="left:524px;top:136px;width:59px;height:23px;background:#dedede;border:1px solid #b4b4b4;"></div>
<svg class="i" style="left:529px;top:139px;" width="16" height="16" viewBox="0 0 16 16"><defs><linearGradient id="rg" x1="0" y1="0" x2="0" y2="1"><stop offset="0" stop-color="#ee7264"/><stop offset=".45" stop-color="#d8303a"/><stop offset="1" stop-color="#b01820"/></linearGradient></defs><circle cx="8" cy="8" r="7.400" fill="url(#rg)" stroke="#a81c22" stroke-width="1"/><path d="M5.200 5.200L10.800 10.800M10.800 5.200L5.200 10.800" stroke="#9c1418" stroke-width="3.600" stroke-linecap="round" opacity=".5"/><path d="M5.200 5.200L10.800 10.800M10.800 5.200L5.200 10.800" stroke="#eef2fa" stroke-width="2.500" stroke-linecap="round"/></svg>
<span class="t" style="left:551px;top:137px;line-height:20px;height:20px;">Týmy</span>
<div style="left:584px;top:136px;width:72px;height:23px;background:#dedede;border:1px solid #b4b4b4;"></div>
<svg class="i" style="left:589px;top:139px;" width="16" height="16" viewBox="0 0 16 16"><defs><linearGradient id="rg" x1="0" y1="0" x2="0" y2="1"><stop offset="0" stop-color="#ee7264"/><stop offset=".45" stop-color="#d8303a"/><stop offset="1" stop-color="#b01820"/></linearGradient></defs><circle cx="8" cy="8" r="7.400" fill="url(#rg)" stroke="#a81c22" stroke-width="1"/><path d="M5.200 5.200L10.800 10.800M10.800 5.200L5.200 10.800" stroke="#9c1418" stroke-width="3.600" stroke-linecap="round" opacity=".5"/><path d="M5.200 5.200L10.800 10.800M10.800 5.200L5.200 10.800" stroke="#eef2fa" stroke-width="2.500" stroke-linecap="round"/></svg>
<span class="t" style="left:611px;top:137px;line-height:20px;height:20px;">Soutěže</span>
<div style="left:657px;top:136px;width:74px;height:23px;background:#dedede;border:1px solid #b4b4b4;"></div>
<svg class="i" style="left:662px;top:139px;" width="16" height="16" viewBox="0 0 16 16"><defs><linearGradient id="rg" x1="0" y1="0" x2="0" y2="1"><stop offset="0" stop-color="#ee7264"/><stop offset=".45" stop-color="#d8303a"/><stop offset="1" stop-color="#b01820"/></linearGradient></defs><circle cx="8" cy="8" r="7.400" fill="url(#rg)" stroke="#a81c22" stroke-width="1"/><path d="M5.200 5.200L10.800 10.800M10.800 5.200L5.200 10.800" stroke="#9c1418" stroke-width="3.600" stroke-linecap="round" opacity=".5"/><path d="M5.200 5.200L10.800 10.800M10.800 5.200L5.200 10.800" stroke="#eef2fa" stroke-width="2.500" stroke-linecap="round"/></svg>
<span class="t" style="left:684px;top:137px;line-height:20px;height:20px;">Vybrané</span>
<div style="left:732px;top:136px;width:57px;height:23px;background:#dedede;border:1px solid #b4b4b4;"></div>
<svg class="i" style="left:737px;top:139px;" width="16" height="16" viewBox="0 0 16 16"><defs><linearGradient id="rg" x1="0" y1="0" x2="0" y2="1"><stop offset="0" stop-color="#ee7264"/><stop offset=".45" stop-color="#d8303a"/><stop offset="1" stop-color="#b01820"/></linearGradient></defs><circle cx="8" cy="8" r="7.400" fill="url(#rg)" stroke="#a81c22" stroke-width="1"/><path d="M5.200 5.200L10.800 10.800M10.800 5.200L5.200 10.800" stroke="#9c1418" stroke-width="3.600" stroke-linecap="round" opacity=".5"/><path d="M5.200 5.200L10.800 10.800M10.800 5.200L5.200 10.800" stroke="#eef2fa" stroke-width="2.500" stroke-linecap="round"/></svg>
<span class="t" style="left:759px;top:137px;line-height:20px;height:20px;">Skrýt</span>
<div style="left:790px;top:136px;width:129px;height:23px;background:#dedede;border:1px solid #b4b4b4;"></div>
<svg class="i" style="left:795px;top:139px;" width="16" height="16" viewBox="0 0 16 16"><defs><linearGradient id="rg" x1="0" y1="0" x2="0" y2="1"><stop offset="0" stop-color="#ee7264"/><stop offset=".45" stop-color="#d8303a"/><stop offset="1" stop-color="#b01820"/></linearGradient></defs><circle cx="8" cy="8" r="7.400" fill="url(#rg)" stroke="#a81c22" stroke-width="1"/><path d="M5.200 5.200L10.800 10.800M10.800 5.200L5.200 10.800" stroke="#9c1418" stroke-width="3.600" stroke-linecap="round" opacity=".5"/><path d="M5.200 5.200L10.800 10.800M10.800 5.200L5.200 10.800" stroke="#eef2fa" stroke-width="2.500" stroke-linecap="round"/></svg>
<span class="t" style="left:817px;top:137px;line-height:20px;height:20px;transform:scaleX(1.0187);transform-origin:0 0;">Výsledky více filtrů</span>
<div style="left:920px;top:136px;width:55px;height:23px;background:#dedede;border:1px solid #b4b4b4;"></div>
<svg class="i" style="left:925px;top:139px;" width="16" height="16" viewBox="0 0 16 16"><defs><linearGradient id="rg" x1="0" y1="0" x2="0" y2="1"><stop offset="0" stop-color="#ee7264"/><stop offset=".45" stop-color="#d8303a"/><stop offset="1" stop-color="#b01820"/></linearGradient></defs><circle cx="8" cy="8" r="7.400" fill="url(#rg)" stroke="#a81c22" stroke-width="1"/><path d="M5.200 5.200L10.800 10.800M10.800 5.200L5.200 10.800" stroke="#9c1418" stroke-width="3.600" stroke-linecap="round" opacity=".5"/><path d="M5.200 5.200L10.800 10.800M10.800 5.200L5.200 10.800" stroke="#eef2fa" stroke-width="2.500" stroke-linecap="round"/></svg>
<span class="t" style="left:947px;top:137px;line-height:20px;height:20px;">Více</span>
<div style="left:970px;top:137px;width:60px;height:23px;background:#f0f0f0;"></div>
<div style="left:262px;top:136px;width:62px;height:24px;background:#f0f0f0;"></div>
<svg class="i" style="left:267px;top:140px;" width="15" height="15" viewBox="0 0 16 16" preserveAspectRatio="none"><defs><linearGradient id="gg" x1="0" y1="0" x2="0" y2="1"><stop offset="0" stop-color="#a4d858"/><stop offset=".5" stop-color="#7cba2c"/><stop offset="1" stop-color="#5c9a18"/></linearGradient></defs><circle cx="8" cy="8" r="7.400" fill="url(#gg)" stroke="#4f8a14" stroke-width="1"/><path d="M2.600 5.800a5.800 5.800 0 0 1 10.800 0a9 4 0 0 0-10.800 0z" fill="#d4f0a0" opacity=".55"/><path d="M4.300 8.300L7 11L11.800 5.300" fill="none" stroke="#3f6d10" stroke-width="3.200" stroke-linecap="round" stroke-linejoin="round"/><path d="M4.300 8.300L7 11L11.800 5.300" fill="none" stroke="#fff" stroke-width="1.700" stroke-linecap="round" stroke-linejoin="round"/></svg>
<span class="t" style="left:289px;top:137px;line-height:20px;height:20px;">Výběr</span>
<svg class="i" style="left:977.5px;top:147.5px;" width="7" height="5" viewBox="0 0 7 5"><path d="M0 .3h7L3.500 4.800z" fill="#6e6e6e"/></svg>
<svg class="i" style="left:998px;top:146px;" width="5" height="8" viewBox="0 0 5 8"><path d="M4.500 .5L.5 4L4.500 7.500z" fill="#c8c8c8"/></svg>
<svg class="i" style="left:1018px;top:146px;" width="5" height="8" viewBox="0 0 5 8"><path d="M.5 .5L4.500 4L.5 7.500z" fill="#606060"/></svg>
<div style="left:262px;top:164px;width:767px;height:498px;background:#fff;border:1px solid #c6c6c6;"></div>
<div style="left:263px;top:165px;width:765px;height:35px;background:#f0f0f0;"></div>
<div style="left:263px;top:200px;width:765px;height:2px;background:#ababab"></div>
<div style="left:268px;top:172px;width:312px;height:21px;background:#fff;border:1px solid #ababab;"></div>
<span class="t" style="left:269px;top:171px;line-height:21px;height:21px;width:294px;text-align:center;transform:scaleX(1.0776);transform-origin:50% 0;">--- Vše ---</span>
<svg class="i" style="left:567px;top:181px;" width="7" height="4" viewBox="0 0 7 4"><path d="M.3 0h6.400L3.500 3.200z" fill="#727272"/></svg>
<div style="left:590px;top:166px;width:75px;height:32px;background:#fff;border:1px solid #ababab;"></div>
<svg class="i" style="left:612px;top:167px;" width="30" height="30" viewBox="0 0 30 30"><path d="M3.500 4.500h23c.6 0 .8.600 .4 1L17.500 14.500L16.300 26c-.2 1.300-1.400 1.300-1.600 0L13.500 14.500L3.100 5.500c-.4-.4-.2-1 .4-1z" fill="#737373"/></svg>
<div style="left:666px;top:166px;width:75px;height:32px;background:#fff;border:1px solid #ababab;"></div>
<svg class="i" style="left:688px;top:167px;" width="30" height="30" viewBox="0 0 30 30"><circle cx="15" cy="15" r="14" fill="#e0323f"/><path d="M9.500 9.500L20.500 20.500M20.500 9.500L9.500 20.500" stroke="#fff" stroke-width="2.500" stroke-linecap="round"/></svg>
<div style="left:762px;top:166px;width:75px;height:32px;background:#fff;border:1px solid #ababab;"></div>
<svg class="i" style="left:784px;top:167px;" width="30" height="30" viewBox="0 0 30 30"><path d="M11.500 5.500v-1.500c0-.8.600-1.200 1.200-1.200h5.600c.6 0 1.200.400 1.200 1.200v1.500" fill="none" stroke="#737373" stroke-width="1.800"/><rect x="4.500" y="5.500" width="22" height="3.300" rx=".8" fill="#737373"/><path d="M7 11.500h17v15.500c0 1-.8 1.800-1.800 1.800h-13.400c-1 0-1.800-.8-1.800-1.800z" fill="#fff" stroke="#737373" stroke-width="1.700"/><path d="M10.800 13.500v12.500M14.300 13.500v12.500M17.500 13.500v12.500M20.800 13.500v12.500" stroke="#737373" stroke-width="1.500"/></svg>
<div style="left:838px;top:166px;width:75px;height:32px;background:#fff;border:1px solid #ababab;"></div>
<svg class="i" style="left:860px;top:167px;" width="30" height="30" viewBox="0 0 30 30"><path d="M4 9.500L13 3V7.500H18c5 0 8 3 8 8V27.500h-4.500V15.500c0-2.300-1.300-3.500-3.500-3.500H13V16z" fill="#3b73c4"/></svg>
<div style="left:933px;top:166px;width:75px;height:32px;background:#fff;border:1px solid #ababab;"></div>
<svg class="i" style="left:955px;top:167px;" width="30" height="30" viewBox="0 0 30 30"><path d="M3 15.500c6-9.500 18-9.500 24 0c-6 9.500-18 9.500-24 0z" fill="#737373"/><circle cx="15" cy="15.500" r="6" fill="#fff"/><circle cx="15" cy="15.500" r="4.300" fill="#737373"/><circle cx="16.800" cy="13.800" r="1.600" fill="#fff"/><path d="M24 3.500l2.500 2.500-2.800 2.800-2.500-2.500zM6 22l2.500 2.500-2.800 2.800-2.500-2.500z" fill="#737373"/></svg>
<div style="left:263px;top:202px;width:744px;height:25px;background:#f0f0f0;"></div>
<div style="left:263px;top:227px;width:744px;height:1px;background:#c6c6c6"></div>
<div style="left:333px;top:202px;width:1px;height:25px;background:#c6c6c6"></div>
<div style="left:371px;top:202px;width:1px;height:25px;background:#c6c6c6"></div>
<div style="left:482px;top:202px;width:1px;height:25px;background:#c6c6c6"></div>
<div style="left:494px;top:202px;width:1px;height:25px;background:#c6c6c6"></div>
<div style="left:610px;top:202px;width:1px;height:25px;background:#c6c6c6"></div>
<div style="left:645px;top:202px;width:1px;height:25px;background:#c6c6c6"></div>
<div style="left:657px;top:202px;width:1px;height:25px;background:#c6c6c6"></div>
<div style="left:690px;top:202px;width:1px;height:25px;background:#c6c6c6"></div>
<div style="left:718px;top:202px;width:1px;height:25px;background:#c6c6c6"></div>
<div style="left:766px;top:202px;width:1px;height:25px;background:#c6c6c6"></div>
<div style="left:814px;top:202px;width:1px;height:25px;background:#c6c6c6"></div>
<div style="left:862px;top:202px;width:1px;height:25px;background:#c6c6c6"></div>
<div style="left:910px;top:202px;width:1px;height:25px;background:#c6c6c6"></div>
<div style="left:958px;top:202px;width:1px;height:25px;background:#c6c6c6"></div>
<div style="left:1006px;top:202px;width:1px;height:25px;background:#c6c6c6"></div>
<span class="t" style="left:269px;top:202px;line-height:24px;height:24px;">Datum</span>
<svg class="i" style="left:315px;top:211px;" width="8" height="7" viewBox="0 0 8 7"><path d="M0 .5h2.500M0 2.500h4.500M0 4.500h6.500M0 6.500h8" stroke="#9a9a9a" stroke-width="1"/></svg>
<span class="t" style="left:340px;top:202px;line-height:24px;height:24px;">Č</span>
<svg class="i" style="left:353px;top:211px;" width="8" height="7" viewBox="0 0 8 7"><path d="M0 .5h2.500M0 2.500h4.500M0 4.500h6.500M0 6.500h8" stroke="#9a9a9a" stroke-width="1"/></svg>
<span class="t" style="left:371px;top:202px;line-height:24px;height:24px;width:105.5px;text-align:right;">Domácí</span>
<span class="t" style="left:501px;top:202px;line-height:24px;height:24px;">Hosté</span>
<span class="t" style="left:617px;top:202px;line-height:24px;height:24px;">GD</span>
<span class="t" style="left:664px;top:202px;line-height:24px;height:24px;">GH</span>
<span class="t" style="left:697px;top:202px;line-height:24px;height:24px;">i...</span>
<span class="t" style="left:726px;top:202px;line-height:24px;height:24px;">1</span>
<span class="t" style="left:774px;top:202px;line-height:24px;height:24px;">10</span>
<span class="t" style="left:821px;top:202px;line-height:24px;height:24px;">0</span>
<span class="t" style="left:869px;top:202px;line-height:24px;height:24px;">02</span>
<span class="t" style="left:917px;top:202px;line-height:24px;height:24px;">2</span>
<span class="t" style="left:965px;top:202px;line-height:24px;height:24px;">12</span>
<div style="left:263px;top:228px;width:744px;height:32px;background:#f0f0f0;"></div>
<div style="left:263px;top:260px;width:744px;height:1px;background:#c6c6c6"></div>
<svg class="i" style="left:267.5px;top:248.5px;" width="7.5" height="5" viewBox="0 0 8 5" preserveAspectRatio="none"><path d="M.2 .5L4 4.900L7.800 .5L5.900 .5L4 2.800L2.100 .5z" fill="#2370dc"/></svg>
<span class="t" style="left:281px;top:235px;line-height:18px;height:18px;color:#1a66cc;transform:scaleX(1.0154);transform-origin:0 0;">Fotbal / 1.anglická liga</span>
<div style="left:402.5px;top:252px;width:3px;height:1px;background:#1a66cc"></div>
<span class="t" style="left:405px;top:235px;line-height:18px;height:18px;color:#1a66cc;transform:scaleX(0.9543);transform-origin:0 0;">zápasů: 10</span>
<span class="t" style="left:466px;top:235px;line-height:18px;height:18px;color:#1a66cc;transform:scaleX(0.9408);transform-origin:0 0;">domácí 2</span>
<span class="t" style="left:521px;top:235px;line-height:18px;height:18px;color:#1a66cc;transform:scaleX(0.8398);transform-origin:0 0;">remíz 4</span>
<span class="t" style="left:559.5px;top:235px;line-height:18px;height:18px;color:#1a66cc;transform:scaleX(0.9809);transform-origin:0 0;">hosté 4</span>
<span class="t" style="left:615px;top:235px;line-height:18px;height:18px;color:#1a66cc;transform:scaleX(0.9274);transform-origin:0 0;">20% - 40% - 40%</span>
<div style="left:263px;top:261px;width:744px;height:17px;background:#fff;"></div>
<svg class="i" style="left:269.3px;top:266px;" width="5.5" height="8" viewBox="0 0 5 8" preserveAspectRatio="none"><path d="M.5 .2L4.900 4L.5 7.800L.5 5.900L2.800 4L.5 2.100z" fill="#2370dc"/></svg>
<div style="left:279px;top:261px;width:440px;height:17px;background:#1b67cd;"></div>
<div style="left:767px;top:261px;width:240px;height:17px;background:#1b67cd;"></div>
<span class="t" style="left:296px;top:262px;line-height:17px;height:17px;color:#fff;transform:scaleX(0.9496);transform-origin:0 0;">10.2.26 20:30</span>
<span class="t" style="left:371px;top:262px;line-height:17px;height:17px;width:110px;text-align:right;color:#fff;transform:scaleX(0.9347);transform-origin:100% 0;">Chelsea</span>
<span class="t" style="left:487.5px;top:262px;line-height:17px;height:17px;color:#fff;">-</span>
<span class="t" style="left:497px;top:262px;line-height:17px;height:17px;color:#fff;transform:scaleX(0.9015);transform-origin:0 0;">Leeds</span>
<span class="t" style="left:610px;top:262px;line-height:17px;height:17px;width:34.5px;text-align:right;color:#fff;">2</span>
<span class="t" style="left:645px;top:262px;line-height:17px;height:17px;width:12px;text-align:center;color:#fff;">:</span>
<span class="t" style="left:660px;top:262px;line-height:17px;height:17px;color:#fff;">2</span>
<span class="t" style="left:718px;top:262px;line-height:17px;height:17px;width:47.3px;text-align:right;color:#404040;">1.51</span>
<span class="t" style="left:766px;top:262px;line-height:17px;height:17px;width:47.3px;text-align:right;color:#fff;">1.14</span>
<span class="t" style="left:814px;top:262px;line-height:17px;height:17px;width:47.3px;text-align:right;color:#fff;font-weight:bold;">4.61</span>
<svg class="i" style="left:831.3px;top:268px" width="6" height="8.5" viewBox="0 0 6 8.5"><path d="M3 0V7.5M.6 5.1L3 7.7L5.400 5.1" fill="none" stroke="#f01818" stroke-width="1.150"/></svg>
<span class="t" style="left:862px;top:262px;line-height:17px;height:17px;width:47.3px;text-align:right;color:#fff;">2.67</span>
<svg class="i" style="left:879.3px;top:268px" width="6" height="8.5" viewBox="0 0 6 8.5"><path d="M3 0V7.5M.6 5.1L3 7.7L5.400 5.1" fill="none" stroke="#f01818" stroke-width="1.150"/></svg>
<span class="t" style="left:910px;top:262px;line-height:17px;height:17px;width:47.3px;text-align:right;color:#fff;">6.48</span>
<svg class="i" style="left:927.3px;top:268px" width="6" height="8.5" viewBox="0 0 6 8.5"><path d="M3 0V7.5M.6 5.1L3 7.7L5.400 5.1" fill="none" stroke="#f01818" stroke-width="1.150"/></svg>
<span class="t" style="left:958px;top:262px;line-height:17px;height:17px;width:47.3px;text-align:right;color:#fff;">1.23</span>
<div style="left:263px;top:278px;width:744px;height:17px;background:#f2f2f2;"></div>
<svg class="i" style="left:269.3px;top:283px;" width="5.5" height="8" viewBox="0 0 5 8" preserveAspectRatio="none"><path d="M.5 .2L4.900 4L.5 7.800L.5 5.900L2.800 4L.5 2.100z" fill="#2370dc"/></svg>
<span class="t" style="left:296px;top:279px;line-height:17px;height:17px;color:#404040;transform:scaleX(0.9496);transform-origin:0 0;">10.2.26 20:30</span>
<span class="t" style="left:371px;top:279px;line-height:17px;height:17px;width:110px;text-align:right;color:#f20000;transform:scaleX(0.9766);transform-origin:100% 0;">Everton</span>
<span class="t" style="left:487.5px;top:279px;line-height:17px;height:17px;color:#404040;">-</span>
<span class="t" style="left:497px;top:279px;line-height:17px;height:17px;color:#007a00;font-weight:bold;transform:scaleX(0.9618);transform-origin:0 0;">Bournemouth</span>
<span class="t" style="left:610px;top:279px;line-height:17px;height:17px;width:34.5px;text-align:right;color:#404040;">1</span>
<span class="t" style="left:645px;top:279px;line-height:17px;height:17px;width:12px;text-align:center;color:#404040;">:</span>
<span class="t" style="left:660px;top:279px;line-height:17px;height:17px;color:#404040;">2</span>
<span class="t" style="left:718px;top:279px;line-height:17px;height:17px;width:47.3px;text-align:right;color:#404040;">2.37</span>
<svg class="i" style="left:735.3px;top:280px" width="6" height="7" viewBox="0 0 6 7"><path d="M3 7V1M.6 3.400L3 .8L5.400 3.400" fill="none" stroke="#0a7f0a" stroke-width="1.150"/></svg>
<span class="t" style="left:766px;top:279px;line-height:17px;height:17px;width:47.3px;text-align:right;color:#404040;">1.41</span>
<svg class="i" style="left:783.3px;top:285px" width="6" height="8.5" viewBox="0 0 6 8.5"><path d="M3 0V7.5M.6 5.1L3 7.7L5.400 5.1" fill="none" stroke="#f01818" stroke-width="1.150"/></svg>
<span class="t" style="left:814px;top:279px;line-height:17px;height:17px;width:47.3px;text-align:right;color:#404040;">3.52</span>
<svg class="i" style="left:831.3px;top:285px" width="6" height="8.5" viewBox="0 0 6 8.5"><path d="M3 0V7.5M.6 5.1L3 7.7L5.400 5.1" fill="none" stroke="#f01818" stroke-width="1.150"/></svg>
<span class="t" style="left:862px;top:279px;line-height:17px;height:17px;width:47.3px;text-align:right;color:#404040;">1.64</span>
<svg class="i" style="left:879.3px;top:285px" width="6" height="8.5" viewBox="0 0 6 8.5"><path d="M3 0V7.5M.6 5.1L3 7.7L5.400 5.1" fill="none" stroke="#f01818" stroke-width="1.150"/></svg>
<span class="t" style="left:910px;top:279px;line-height:17px;height:17px;width:47.3px;text-align:right;color:#404040;font-weight:bold;">3.12</span>
<svg class="i" style="left:927.3px;top:280px" width="6" height="7" viewBox="0 0 6 7"><path d="M3 7V1M.6 3.400L3 .8L5.400 3.400" fill="none" stroke="#0a7f0a" stroke-width="1.150"/></svg>
<span class="t" style="left:958px;top:279px;line-height:17px;height:17px;width:47.3px;text-align:right;color:#404040;">1.35</span>
<svg class="i" style="left:975.3px;top:280px" width="6" height="7" viewBox="0 0 6 7"><path d="M3 7V1M.6 3.400L3 .8L5.400 3.400" fill="none" stroke="#0a7f0a" stroke-width="1.150"/></svg>
<div style="left:263px;top:295px;width:744px;height:17px;background:#fff;"></div>
<svg class="i" style="left:269.3px;top:300px;" width="5.5" height="8" viewBox="0 0 5 8" preserveAspectRatio="none"><path d="M.5 .2L4.900 4L.5 7.800L.5 5.900L2.800 4L.5 2.100z" fill="#2370dc"/></svg>
<span class="t" style="left:296px;top:296px;line-height:17px;height:17px;color:#404040;transform:scaleX(0.9496);transform-origin:0 0;">10.2.26 20:30</span>
<span class="t" style="left:371px;top:296px;line-height:17px;height:17px;width:110px;text-align:right;color:#f20000;transform:scaleX(1.0281);transform-origin:100% 0;">Tottenham</span>
<span class="t" style="left:487.5px;top:296px;line-height:17px;height:17px;color:#404040;">-</span>
<span class="t" style="left:497px;top:296px;line-height:17px;height:17px;color:#007a00;font-weight:bold;transform:scaleX(0.9332);transform-origin:0 0;">Newcastle</span>
<span class="t" style="left:610px;top:296px;line-height:17px;height:17px;width:34.5px;text-align:right;color:#404040;">1</span>
<span class="t" style="left:645px;top:296px;line-height:17px;height:17px;width:12px;text-align:center;color:#404040;">:</span>
<span class="t" style="left:660px;top:296px;line-height:17px;height:17px;color:#404040;">2</span>
<span class="t" style="left:718px;top:296px;line-height:17px;height:17px;width:47.3px;text-align:right;color:#404040;">3.08</span>
<svg class="i" style="left:735.3px;top:302px" width="6" height="8.5" viewBox="0 0 6 8.5"><path d="M3 0V7.5M.6 5.1L3 7.7L5.400 5.1" fill="none" stroke="#f01818" stroke-width="1.150"/></svg>
<span class="t" style="left:766px;top:296px;line-height:17px;height:17px;width:47.3px;text-align:right;color:#404040;">1.68</span>
<svg class="i" style="left:783.3px;top:302px" width="6" height="8.5" viewBox="0 0 6 8.5"><path d="M3 0V7.5M.6 5.1L3 7.7L5.400 5.1" fill="none" stroke="#f01818" stroke-width="1.150"/></svg>
<span class="t" style="left:814px;top:296px;line-height:17px;height:17px;width:47.3px;text-align:right;color:#404040;">3.76</span>
<svg class="i" style="left:831.3px;top:302px" width="6" height="8.5" viewBox="0 0 6 8.5"><path d="M3 0V7.5M.6 5.1L3 7.7L5.400 5.1" fill="none" stroke="#f01818" stroke-width="1.150"/></svg>
<span class="t" style="left:862px;top:296px;line-height:17px;height:17px;width:47.3px;text-align:right;color:#404040;">1.41</span>
<svg class="i" style="left:879.3px;top:297px" width="6" height="7" viewBox="0 0 6 7"><path d="M3 7V1M.6 3.400L3 .8L5.400 3.400" fill="none" stroke="#0a7f0a" stroke-width="1.150"/></svg>
<span class="t" style="left:910px;top:296px;line-height:17px;height:17px;width:47.3px;text-align:right;color:#404040;font-weight:bold;">2.29</span>
<svg class="i" style="left:927.3px;top:297px" width="6" height="7" viewBox="0 0 6 7"><path d="M3 7V1M.6 3.400L3 .8L5.400 3.400" fill="none" stroke="#0a7f0a" stroke-width="1.150"/></svg>
<span class="t" style="left:958px;top:296px;line-height:17px;height:17px;width:47.3px;text-align:right;color:#404040;">1.31</span>
<div style="left:263px;top:312px;width:744px;height:17px;background:#f2f2f2;"></div>
<svg class="i" style="left:269.3px;top:317px;" width="5.5" height="8" viewBox="0 0 5 8" preserveAspectRatio="none"><path d="M.5 .2L4.900 4L.5 7.800L.5 5.900L2.800 4L.5 2.100z" fill="#2370dc"/></svg>
<span class="t" style="left:296px;top:313px;line-height:17px;height:17px;color:#404040;transform:scaleX(0.9496);transform-origin:0 0;">10.2.26 21:15</span>
<span class="t" style="left:371px;top:313px;line-height:17px;height:17px;width:110px;text-align:right;color:#1a1af0;transform:scaleX(0.9717);transform-origin:100% 0;">West Ham</span>
<span class="t" style="left:487.5px;top:313px;line-height:17px;height:17px;color:#404040;">-</span>
<span class="t" style="left:497px;top:313px;line-height:17px;height:17px;color:#1a1af0;">Manchester United</span>
<span class="t" style="left:610px;top:313px;line-height:17px;height:17px;width:34.5px;text-align:right;color:#404040;">1</span>
<span class="t" style="left:645px;top:313px;line-height:17px;height:17px;width:12px;text-align:center;color:#404040;">:</span>
<span class="t" style="left:660px;top:313px;line-height:17px;height:17px;color:#404040;">1</span>
<span class="t" style="left:718px;top:313px;line-height:17px;height:17px;width:47.3px;text-align:right;color:#404040;">4.54</span>
<svg class="i" style="left:735.3px;top:314px" width="6" height="7" viewBox="0 0 6 7"><path d="M3 7V1M.6 3.400L3 .8L5.400 3.400" fill="none" stroke="#0a7f0a" stroke-width="1.150"/></svg>
<span class="t" style="left:766px;top:313px;line-height:17px;height:17px;width:47.3px;text-align:right;color:#404040;">2.22</span>
<svg class="i" style="left:783.3px;top:314px" width="6" height="7" viewBox="0 0 6 7"><path d="M3 7V1M.6 3.400L3 .8L5.400 3.400" fill="none" stroke="#0a7f0a" stroke-width="1.150"/></svg>
<span class="t" style="left:814px;top:313px;line-height:17px;height:17px;width:47.3px;text-align:right;color:#404040;font-weight:bold;">4.44</span>
<svg class="i" style="left:831.3px;top:314px" width="6" height="7" viewBox="0 0 6 7"><path d="M3 7V1M.6 3.400L3 .8L5.400 3.400" fill="none" stroke="#0a7f0a" stroke-width="1.150"/></svg>
<span class="t" style="left:862px;top:313px;line-height:17px;height:17px;width:47.3px;text-align:right;color:#404040;">1.23</span>
<svg class="i" style="left:879.3px;top:319px" width="6" height="8.5" viewBox="0 0 6 8.5"><path d="M3 0V7.5M.6 5.1L3 7.7L5.400 5.1" fill="none" stroke="#f01818" stroke-width="1.150"/></svg>
<span class="t" style="left:910px;top:313px;line-height:17px;height:17px;width:47.3px;text-align:right;color:#404040;">1.71</span>
<svg class="i" style="left:927.3px;top:319px" width="6" height="8.5" viewBox="0 0 6 8.5"><path d="M3 0V7.5M.6 5.1L3 7.7L5.400 5.1" fill="none" stroke="#f01818" stroke-width="1.150"/></svg>
<span class="t" style="left:958px;top:313px;line-height:17px;height:17px;width:47.3px;text-align:right;color:#404040;">1.25</span>
<div style="left:263px;top:329px;width:744px;height:17px;background:#fff;"></div>
<svg class="i" style="left:269.3px;top:334px;" width="5.5" height="8" viewBox="0 0 5 8" preserveAspectRatio="none"><path d="M.5 .2L4.900 4L.5 7.800L.5 5.900L2.800 4L.5 2.100z" fill="#2370dc"/></svg>
<span class="t" style="left:296px;top:330px;line-height:17px;height:17px;color:#404040;transform:scaleX(0.9612);transform-origin:0 0;">11.2.26 20:30</span>
<span class="t" style="left:371px;top:330px;line-height:17px;height:17px;width:110px;text-align:right;color:#007a00;font-weight:bold;transform:scaleX(0.9478);transform-origin:100% 0;">Aston Villa</span>
<span class="t" style="left:487.5px;top:330px;line-height:17px;height:17px;color:#404040;">-</span>
<span class="t" style="left:497px;top:330px;line-height:17px;height:17px;color:#f20000;transform:scaleX(1.033);transform-origin:0 0;">Brighton</span>
<span class="t" style="left:610px;top:330px;line-height:17px;height:17px;width:34.5px;text-align:right;color:#404040;">1</span>
<span class="t" style="left:645px;top:330px;line-height:17px;height:17px;width:12px;text-align:center;color:#404040;">:</span>
<span class="t" style="left:660px;top:330px;line-height:17px;height:17px;color:#404040;">0</span>
<span class="t" style="left:718px;top:330px;line-height:17px;height:17px;width:47.3px;text-align:right;color:#404040;font-weight:bold;">2.09</span>
<span class="t" style="left:766px;top:330px;line-height:17px;height:17px;width:47.3px;text-align:right;color:#404040;">1.33</span>
<span class="t" style="left:814px;top:330px;line-height:17px;height:17px;width:47.3px;text-align:right;color:#404040;">3.73</span>
<svg class="i" style="left:831.3px;top:331px" width="6" height="7" viewBox="0 0 6 7"><path d="M3 7V1M.6 3.400L3 .8L5.400 3.400" fill="none" stroke="#0a7f0a" stroke-width="1.150"/></svg>
<span class="t" style="left:862px;top:330px;line-height:17px;height:17px;width:47.3px;text-align:right;color:#404040;">1.81</span>
<span class="t" style="left:910px;top:330px;line-height:17px;height:17px;width:47.3px;text-align:right;color:#404040;">3.54</span>
<svg class="i" style="left:927.3px;top:336px" width="6" height="8.5" viewBox="0 0 6 8.5"><path d="M3 0V7.5M.6 5.1L3 7.7L5.400 5.1" fill="none" stroke="#f01818" stroke-width="1.150"/></svg>
<span class="t" style="left:958px;top:330px;line-height:17px;height:17px;width:47.3px;text-align:right;color:#404040;">1.32</span>
<div style="left:263px;top:346px;width:744px;height:17px;background:#f2f2f2;"></div>
<svg class="i" style="left:269.3px;top:351px;" width="5.5" height="8" viewBox="0 0 5 8" preserveAspectRatio="none"><path d="M.5 .2L4.900 4L.5 7.800L.5 5.900L2.800 4L.5 2.100z" fill="#2370dc"/></svg>
<span class="t" style="left:296px;top:347px;line-height:17px;height:17px;color:#404040;transform:scaleX(0.9612);transform-origin:0 0;">11.2.26 20:30</span>
<span class="t" style="left:371px;top:347px;line-height:17px;height:17px;width:110px;text-align:right;color:#f20000;transform:scaleX(0.9266);transform-origin:100% 0;">Crystal Palace</span>
<span class="t" style="left:487.5px;top:347px;line-height:17px;height:17px;color:#404040;">-</span>
<span class="t" style="left:497px;top:347px;line-height:17px;height:17px;color:#007a00;font-weight:bold;transform:scaleX(0.9226);transform-origin:0 0;">Burnley</span>
<span class="t" style="left:610px;top:347px;line-height:17px;height:17px;width:34.5px;text-align:right;color:#404040;">2</span>
<span class="t" style="left:645px;top:347px;line-height:17px;height:17px;width:12px;text-align:center;color:#404040;">:</span>
<span class="t" style="left:660px;top:347px;line-height:17px;height:17px;color:#404040;">3</span>
<span class="t" style="left:718px;top:347px;line-height:17px;height:17px;width:47.3px;text-align:right;color:#404040;">1.48</span>
<svg class="i" style="left:735.3px;top:348px" width="6" height="7" viewBox="0 0 6 7"><path d="M3 7V1M.6 3.400L3 .8L5.400 3.400" fill="none" stroke="#0a7f0a" stroke-width="1.150"/></svg>
<span class="t" style="left:766px;top:347px;line-height:17px;height:17px;width:47.3px;text-align:right;color:#404040;">1.11</span>
<span class="t" style="left:814px;top:347px;line-height:17px;height:17px;width:47.3px;text-align:right;color:#404040;">4.54</span>
<span class="t" style="left:862px;top:347px;line-height:17px;height:17px;width:47.3px;text-align:right;color:#404040;">2.79</span>
<svg class="i" style="left:879.3px;top:353px" width="6" height="8.5" viewBox="0 0 6 8.5"><path d="M3 0V7.5M.6 5.1L3 7.7L5.400 5.1" fill="none" stroke="#f01818" stroke-width="1.150"/></svg>
<span class="t" style="left:910px;top:347px;line-height:17px;height:17px;width:47.3px;text-align:right;color:#404040;font-weight:bold;">7.43</span>
<svg class="i" style="left:927.3px;top:353px" width="6" height="8.5" viewBox="0 0 6 8.5"><path d="M3 0V7.5M.6 5.1L3 7.7L5.400 5.1" fill="none" stroke="#f01818" stroke-width="1.150"/></svg>
<span class="t" style="left:958px;top:347px;line-height:17px;height:17px;width:47.3px;text-align:right;color:#404040;">1.24</span>
<div style="left:263px;top:363px;width:744px;height:17px;background:#fff;"></div>
<svg class="i" style="left:269.3px;top:368px;" width="5.5" height="8" viewBox="0 0 5 8" preserveAspectRatio="none"><path d="M.5 .2L4.900 4L.5 7.800L.5 5.900L2.800 4L.5 2.100z" fill="#2370dc"/></svg>
<span class="t" style="left:296px;top:364px;line-height:17px;height:17px;color:#404040;transform:scaleX(0.9612);transform-origin:0 0;">11.2.26 20:30</span>
<span class="t" style="left:371px;top:364px;line-height:17px;height:17px;width:110px;text-align:right;color:#007a00;font-weight:bold;transform:scaleX(0.9422);transform-origin:100% 0;">Manchester City</span>
<span class="t" style="left:487.5px;top:364px;line-height:17px;height:17px;color:#404040;">-</span>
<span class="t" style="left:497px;top:364px;line-height:17px;height:17px;color:#f20000;transform:scaleX(0.9647);transform-origin:0 0;">Fulham</span>
<span class="t" style="left:610px;top:364px;line-height:17px;height:17px;width:34.5px;text-align:right;color:#404040;">3</span>
<span class="t" style="left:645px;top:364px;line-height:17px;height:17px;width:12px;text-align:center;color:#404040;">:</span>
<span class="t" style="left:660px;top:364px;line-height:17px;height:17px;color:#404040;">0</span>
<span class="t" style="left:718px;top:364px;line-height:17px;height:17px;width:47.3px;text-align:right;color:#404040;font-weight:bold;">1.39</span>
<svg class="i" style="left:735.3px;top:365px" width="6" height="7" viewBox="0 0 6 7"><path d="M3 7V1M.6 3.400L3 .8L5.400 3.400" fill="none" stroke="#0a7f0a" stroke-width="1.150"/></svg>
<span class="t" style="left:766px;top:364px;line-height:17px;height:17px;width:47.3px;text-align:right;color:#404040;">1.11</span>
<span class="t" style="left:814px;top:364px;line-height:17px;height:17px;width:47.3px;text-align:right;color:#404040;">5.43</span>
<svg class="i" style="left:831.3px;top:365px" width="6" height="7" viewBox="0 0 6 7"><path d="M3 7V1M.6 3.400L3 .8L5.400 3.400" fill="none" stroke="#0a7f0a" stroke-width="1.150"/></svg>
<span class="t" style="left:862px;top:364px;line-height:17px;height:17px;width:47.3px;text-align:right;color:#404040;">3.18</span>
<svg class="i" style="left:879.3px;top:370px" width="6" height="8.5" viewBox="0 0 6 8.5"><path d="M3 0V7.5M.6 5.1L3 7.7L5.400 5.1" fill="none" stroke="#f01818" stroke-width="1.150"/></svg>
<span class="t" style="left:910px;top:364px;line-height:17px;height:17px;width:47.3px;text-align:right;color:#404040;">7.71</span>
<svg class="i" style="left:927.3px;top:370px" width="6" height="8.5" viewBox="0 0 6 8.5"><path d="M3 0V7.5M.6 5.1L3 7.7L5.400 5.1" fill="none" stroke="#f01818" stroke-width="1.150"/></svg>
<span class="t" style="left:958px;top:364px;line-height:17px;height:17px;width:47.3px;text-align:right;color:#404040;">1.19</span>
<div style="left:263px;top:380px;width:744px;height:30px;background:#f2f2f2;"></div>
<svg class="i" style="left:269.3px;top:392px;" width="5.5" height="8" viewBox="0 0 5 8" preserveAspectRatio="none"><path d="M.5 .2L4.900 4L.5 7.800L.5 5.900L2.800 4L.5 2.100z" fill="#2370dc"/></svg>
<span class="t" style="left:296px;top:380px;line-height:30px;height:30px;color:#404040;transform:scaleX(0.9612);transform-origin:0 0;">11.2.26 20:30</span>
<span class="t" style="left:371px;top:380px;line-height:30px;height:30px;width:110px;text-align:right;color:#1a1af0;transform:scaleX(1.0534);transform-origin:100% 0;">Nottingham</span>
<span class="t" style="left:487.5px;top:380px;line-height:30px;height:30px;color:#404040;">-</span>
<span class="t" style="left:497px;top:383px;line-height:13px;height:13px;color:#1a1af0;transform:scaleX(1.027);transform-origin:0 0;">Wolverhampton</span>
<span class="t" style="left:497px;top:396px;line-height:13px;height:13px;color:#1a1af0;">Wanderers</span>
<span class="t" style="left:610px;top:380px;line-height:30px;height:30px;width:34.5px;text-align:right;color:#404040;">0</span>
<span class="t" style="left:645px;top:380px;line-height:30px;height:30px;width:12px;text-align:center;color:#404040;">:</span>
<span class="t" style="left:660px;top:380px;line-height:30px;height:30px;color:#404040;">0</span>
<span class="t" style="left:718px;top:380px;line-height:30px;height:30px;width:47.3px;text-align:right;color:#404040;">1.75</span>
<span class="t" style="left:766px;top:380px;line-height:30px;height:30px;width:47.3px;text-align:right;color:#404040;">1.21</span>
<span class="t" style="left:814px;top:380px;line-height:30px;height:30px;width:47.3px;text-align:right;color:#404040;font-weight:bold;">3.94</span>
<svg class="i" style="left:831.3px;top:382px" width="6" height="14" viewBox="0 0 6 14"><path d="M3 14V1M.6 3.400L3 .8L5.400 3.400" fill="none" stroke="#0a7f0a" stroke-width="1.150"/></svg>
<span class="t" style="left:862px;top:380px;line-height:30px;height:30px;width:47.3px;text-align:right;color:#404040;">2.16</span>
<span class="t" style="left:910px;top:380px;line-height:30px;height:30px;width:47.3px;text-align:right;color:#404040;">4.89</span>
<svg class="i" style="left:927.3px;top:394.5px" width="6" height="14" viewBox="0 0 6 14"><path d="M3 0V13M.6 10.6L3 13.2L5.400 10.6" fill="none" stroke="#f01818" stroke-width="1.150"/></svg>
<span class="t" style="left:958px;top:380px;line-height:30px;height:30px;width:47.3px;text-align:right;color:#404040;">1.29</span>
<svg class="i" style="left:975.3px;top:394.5px" width="6" height="14" viewBox="0 0 6 14"><path d="M3 0V13M.6 10.6L3 13.2L5.400 10.6" fill="none" stroke="#f01818" stroke-width="1.150"/></svg>
<div style="left:263px;top:410px;width:744px;height:17px;background:#fff;"></div>
<svg class="i" style="left:269.3px;top:415px;" width="5.5" height="8" viewBox="0 0 5 8" preserveAspectRatio="none"><path d="M.5 .2L4.900 4L.5 7.800L.5 5.900L2.800 4L.5 2.100z" fill="#2370dc"/></svg>
<span class="t" style="left:296px;top:411px;line-height:17px;height:17px;color:#404040;transform:scaleX(0.9612);transform-origin:0 0;">11.2.26 21:15</span>
<span class="t" style="left:371px;top:411px;line-height:17px;height:17px;width:110px;text-align:right;color:#f20000;transform:scaleX(1.0192);transform-origin:100% 0;">Sunderland</span>
<span class="t" style="left:487.5px;top:411px;line-height:17px;height:17px;color:#404040;">-</span>
<span class="t" style="left:497px;top:411px;line-height:17px;height:17px;color:#007a00;font-weight:bold;transform:scaleX(0.9418);transform-origin:0 0;">Liverpool</span>
<span class="t" style="left:610px;top:411px;line-height:17px;height:17px;width:34.5px;text-align:right;color:#404040;">0</span>
<span class="t" style="left:645px;top:411px;line-height:17px;height:17px;width:12px;text-align:center;color:#404040;">:</span>
<span class="t" style="left:660px;top:411px;line-height:17px;height:17px;color:#404040;">1</span>
<span class="t" style="left:718px;top:411px;line-height:17px;height:17px;width:47.3px;text-align:right;color:#404040;">4.55</span>
<svg class="i" style="left:735.3px;top:417px" width="6" height="8.5" viewBox="0 0 6 8.5"><path d="M3 0V7.5M.6 5.1L3 7.7L5.400 5.1" fill="none" stroke="#f01818" stroke-width="1.150"/></svg>
<span class="t" style="left:766px;top:411px;line-height:17px;height:17px;width:47.3px;text-align:right;color:#404040;">2.11</span>
<svg class="i" style="left:783.3px;top:417px" width="6" height="8.5" viewBox="0 0 6 8.5"><path d="M3 0V7.5M.6 5.1L3 7.7L5.400 5.1" fill="none" stroke="#f01818" stroke-width="1.150"/></svg>
<span class="t" style="left:814px;top:411px;line-height:17px;height:17px;width:47.3px;text-align:right;color:#404040;">4.01</span>
<svg class="i" style="left:831.3px;top:417px" width="6" height="8.5" viewBox="0 0 6 8.5"><path d="M3 0V7.5M.6 5.1L3 7.7L5.400 5.1" fill="none" stroke="#f01818" stroke-width="1.150"/></svg>
<span class="t" style="left:862px;top:411px;line-height:17px;height:17px;width:47.3px;text-align:right;color:#404040;">1.23</span>
<span class="t" style="left:910px;top:411px;line-height:17px;height:17px;width:47.3px;text-align:right;color:#404040;font-weight:bold;">1.79</span>
<svg class="i" style="left:927.3px;top:412px" width="6" height="7" viewBox="0 0 6 7"><path d="M3 7V1M.6 3.400L3 .8L5.400 3.400" fill="none" stroke="#0a7f0a" stroke-width="1.150"/></svg>
<span class="t" style="left:958px;top:411px;line-height:17px;height:17px;width:47.3px;text-align:right;color:#404040;">1.28</span>
<svg class="i" style="left:975.3px;top:417px" width="6" height="8.5" viewBox="0 0 6 8.5"><path d="M3 0V7.5M.6 5.1L3 7.7L5.400 5.1" fill="none" stroke="#f01818" stroke-width="1.150"/></svg>
<div style="left:263px;top:427px;width:744px;height:17px;background:#f2f2f2;"></div>
<svg class="i" style="left:269.3px;top:432px;" width="5.5" height="8" viewBox="0 0 5 8" preserveAspectRatio="none"><path d="M.5 .2L4.900 4L.5 7.800L.5 5.900L2.800 4L.5 2.100z" fill="#2370dc"/></svg>
<span class="t" style="left:296px;top:428px;line-height:17px;height:17px;color:#404040;transform:scaleX(0.9496);transform-origin:0 0;">12.2.26 21:00</span>
<span class="t" style="left:371px;top:428px;line-height:17px;height:17px;width:110px;text-align:right;color:#1a1af0;transform:scaleX(1.0349);transform-origin:100% 0;">Brentford</span>
<span class="t" style="left:487.5px;top:428px;line-height:17px;height:17px;color:#404040;">-</span>
<span class="t" style="left:497px;top:428px;line-height:17px;height:17px;color:#1a1af0;transform:scaleX(0.9616);transform-origin:0 0;">Arsenal</span>
<span class="t" style="left:610px;top:428px;line-height:17px;height:17px;width:34.5px;text-align:right;color:#404040;">1</span>
<span class="t" style="left:645px;top:428px;line-height:17px;height:17px;width:12px;text-align:center;color:#404040;">:</span>
<span class="t" style="left:660px;top:428px;line-height:17px;height:17px;color:#404040;">1</span>
<span class="t" style="left:718px;top:428px;line-height:17px;height:17px;width:47.3px;text-align:right;color:#404040;">5.52</span>
<svg class="i" style="left:735.3px;top:429px" width="6" height="7" viewBox="0 0 6 7"><path d="M3 7V1M.6 3.400L3 .8L5.400 3.400" fill="none" stroke="#0a7f0a" stroke-width="1.150"/></svg>
<span class="t" style="left:766px;top:428px;line-height:17px;height:17px;width:47.3px;text-align:right;color:#404040;">2.25</span>
<svg class="i" style="left:783.3px;top:429px" width="6" height="7" viewBox="0 0 6 7"><path d="M3 7V1M.6 3.400L3 .8L5.400 3.400" fill="none" stroke="#0a7f0a" stroke-width="1.150"/></svg>
<span class="t" style="left:814px;top:428px;line-height:17px;height:17px;width:47.3px;text-align:right;color:#404040;font-weight:bold;">3.86</span>
<svg class="i" style="left:831.3px;top:429px" width="6" height="7" viewBox="0 0 6 7"><path d="M3 7V1M.6 3.400L3 .8L5.400 3.400" fill="none" stroke="#0a7f0a" stroke-width="1.150"/></svg>
<span class="t" style="left:862px;top:428px;line-height:17px;height:17px;width:47.3px;text-align:right;color:#404040;">1.18</span>
<span class="t" style="left:910px;top:428px;line-height:17px;height:17px;width:47.3px;text-align:right;color:#404040;">1.69</span>
<svg class="i" style="left:927.3px;top:434px" width="6" height="8.5" viewBox="0 0 6 8.5"><path d="M3 0V7.5M.6 5.1L3 7.7L5.400 5.1" fill="none" stroke="#f01818" stroke-width="1.150"/></svg>
<span class="t" style="left:958px;top:428px;line-height:17px;height:17px;width:47.3px;text-align:right;color:#404040;">1.30</span>
<svg class="i" style="left:975.3px;top:434px" width="6" height="8.5" viewBox="0 0 6 8.5"><path d="M3 0V7.5M.6 5.1L3 7.7L5.400 5.1" fill="none" stroke="#f01818" stroke-width="1.150"/></svg>
<div style="left:263px;top:611px;width:744px;height:1px;background:#c6c6c6"></div>
<div style="left:1006px;top:611px;width:1px;height:30px;background:#c6c6c6"></div>
<div style="left:266px;top:615px;width:66px;height:23px;background:#fff;border:1px solid #c6c6c6;"></div>
<span class="t" style="left:266px;top:617px;line-height:21px;height:21px;width:61.5px;text-align:right;transform:scaleX(0.8836);transform-origin:100% 0;">10</span>
<div style="left:335px;top:615px;width:141px;height:23px;background:#fff;border:1px solid #c6c6c6;"></div>
<span class="t" style="left:340.5px;top:617px;line-height:21px;height:21px;transform:scaleX(0.9541);transform-origin:0 0;">bil.: 2 - 4 - 4 .. 20% - 40% -</span>
<div style="left:496px;top:615px;width:113px;height:23px;background:#fff;border:1px solid #c6c6c6;"></div>
<svg class="i" style="left:265px;top:645px;" width="10" height="10" viewBox="1.500 1.500 13 13" preserveAspectRatio="none"><path d="M3 4v8" stroke="#4a4a4a" stroke-width="1.400"/><path d="M8.500 4.500L5 8L8.500 11.500zM13 4.500L9.500 8L13 11.500z" fill="#4a4a4a"/></svg>
<svg class="i" style="left:283px;top:645px;" width="10" height="10" viewBox="1.500 1.500 13 13" preserveAspectRatio="none"><path d="M8 4.500L4 8L8 11.500zM13 4.500L9 8L13 11.500z" fill="#4a4a4a"/></svg>
<svg class="i" style="left:299px;top:645px;" width="10" height="10" viewBox="1.500 1.500 13 13" preserveAspectRatio="none"><path d="M10 4.500L6 8L10 11.500z" fill="#4a4a4a"/></svg>
<svg class="i" style="left:357px;top:645px;" width="10" height="10" viewBox="1.500 1.500 13 13" preserveAspectRatio="none"><path d="M6 4.500L10 8L6 11.500z" fill="#4a4a4a"/></svg>
<svg class="i" style="left:374px;top:645px;" width="10" height="10" viewBox="1.500 1.500 13 13" preserveAspectRatio="none"><path d="M3 4.500L7 8L3 11.500zM8 4.500L12 8L8 11.500z" fill="#4a4a4a"/></svg>
<svg class="i" style="left:391px;top:645px;" width="10" height="10" viewBox="1.500 1.500 13 13" preserveAspectRatio="none"><path d="M13 4v8" stroke="#4a4a4a" stroke-width="1.400"/><path d="M3 4.500L6.500 8L3 11.500zM7.500 4.500L11 8L7.500 11.500z" fill="#4a4a4a"/></svg>
<svg class="i" style="left:408px;top:645px;" width="10" height="10" viewBox="1.500 1.500 13 13" preserveAspectRatio="none"><path d="M3 12V9.500c0-1.500 1-2.500 2.500-2.500H11" fill="none" stroke="#4a4a4a" stroke-width="1.800"/><path d="M9.500 3.500L14 7L9.500 10.500z" fill="#4a4a4a"/></svg>
<svg class="i" style="left:425px;top:645px;" width="10" height="10" viewBox="1.500 1.500 13 13" preserveAspectRatio="none"><path d="M8 3v10M3 8h10M4.500 4.500l7 7M11.500 4.500l-7 7" stroke="#4a4a4a" stroke-width="1.900"/><circle cx="8" cy="8" r="2.800" fill="#4a4a4a"/></svg>
<svg class="i" style="left:441px;top:645px;" width="10" height="10" viewBox="1.500 1.500 13 13" preserveAspectRatio="none"><path d="M8 3v10M3 8h10M4.500 4.500l7 7M11.500 4.500l-7 7" stroke="#9a9a9a" stroke-width="1.200" stroke-dasharray="1.200 1"/><circle cx="8" cy="8" r="2.600" fill="#9a9a9a"/></svg>
<svg class="i" style="left:458px;top:645px;" width="10" height="10" viewBox="1.500 1.500 13 13" preserveAspectRatio="none"><path d="M2 3h12L9.500 8.500V14L6.500 12V8.500z" fill="#4a4a4a"/></svg>
<span class="t" style="left:320px;top:641px;line-height:20px;height:20px;">1 / 10</span>
<svg class="i" style="left:472.0px;top:642.0px;" width="16" height="16" viewBox="0 0 16 16"><circle cx="6.500" cy="6.500" r="5.200" fill="#cfe4fa" stroke="#3f78c8" stroke-width="1.600"/><path d="M3.500 5a3.500 3.500 0 0 1 5-1.500" stroke="#fff" stroke-width="1.200" fill="none"/><path d="M10.500 10.500L14.800 14.800" stroke="#e09a30" stroke-width="2.600" stroke-linecap="round"/></svg>
<svg class="i" style="left:489.5px;top:642.5px;" width="15" height="15" viewBox="0 0 16 16" preserveAspectRatio="none"><circle cx="8" cy="8" r="7.400" fill="#4d90dc" stroke="#2c6bb8" stroke-width="1"/><path d="M2.300 6.200a6 6 0 0 1 11.400 0a9 4.500 0 0 0-11.400 0z" fill="#9cc6f2" opacity=".8"/><path d="M8 4v8M4 8h8" stroke="#2c5f9e" stroke-width="3.600" stroke-linecap="round"/><path d="M8 4v8M4 8h8" stroke="#fff" stroke-width="1.900" stroke-linecap="round"/></svg>
<svg class="i" style="left:506.5px;top:642.5px;" width="15" height="15" viewBox="0 0 16 16" preserveAspectRatio="none"><rect x=".5" y=".5" width="15" height="15" fill="#eef2fb" stroke="#6e84b8" stroke-width="1"/><path d="M8 2L10 4.500H6zM8 14L10 11.500H6zM2 8L4.500 6V10zM14 8L11.500 6V10z" fill="#26365e"/><path d="M8 4v8M4 8h8" stroke="#26365e" stroke-width="1" stroke-dasharray="1.500 1"/></svg>
<svg class="i" style="left:524.5px;top:642.5px;" width="15" height="15" viewBox="0 0 16 16" preserveAspectRatio="none"><path d="M6.75 0.71L9.25 0.71L9.57 2.94L10.47 3.31L12.27 1.96L14.04 3.73L12.69 5.53L13.06 6.43L15.29 6.75L15.29 9.25L13.06 9.57L12.69 10.47L14.04 12.27L12.27 14.04L10.47 12.69L9.57 13.06L9.25 15.29L6.75 15.29L6.43 13.06L5.53 12.69L3.73 14.04L1.96 12.27L3.31 10.47L2.94 9.57L0.71 9.25L0.71 6.75L2.94 6.43L3.31 5.53L1.96 3.73L3.73 1.96L5.53 3.31L6.43 2.94z" fill="#dfe7f5" stroke="#5c6f9c" stroke-width="1.100" stroke-linejoin="round"/><circle cx="8" cy="8" r="2.300" fill="#fff" stroke="#5c6f9c" stroke-width="1.100"/></svg>
<svg class="i" style="left:541.5px;top:642.5px;" width="15" height="15" viewBox="0 0 16 16" preserveAspectRatio="none"><rect x="2" y="2.500" width="12" height="13" fill="#f3b25a" stroke="#c47a1c" stroke-width="1"/><rect x="3.800" y="4.500" width="8.400" height="9.500" fill="#fff"/><rect x="5.500" y=".8" width="5" height="3" fill="#c8c8c8" stroke="#777" stroke-width=".8"/><path d="M6 7.500l1.500 1.500 2.500-3" stroke="#3f9a1c" stroke-width="1.200" fill="none"/><path d="M6.500 10.500l3 3M9.500 10.500l-3 3" stroke="#d83030" stroke-width="1.200"/></svg>
<svg class="i" style="left:558.5px;top:643.0px;" width="14" height="14" viewBox="0 0 16 16" preserveAspectRatio="none"><rect x=".5" y=".5" width="15" height="15" fill="#fff" stroke="#6e84b8" stroke-width="1"/><path d="M3.500 8.500L6.500 12L12.500 3.500" fill="none" stroke="#26365e" stroke-width="1.800"/></svg>
<svg class="i" style="left:575.0px;top:642.0px;" width="16" height="16" viewBox="0 0 16 16"><circle cx="6" cy="5.800" r="5" fill="#f3a646" stroke="#c9741a" stroke-width="1"/><text x="6" y="8.700" font-family="Liberation Sans, sans-serif" font-size="8" fill="#b35c08" text-anchor="middle">€</text><circle cx="10.800" cy="10.800" r="4.700" fill="#6fb32c" stroke="#4a8518" stroke-width="1"/><text x="10.800" y="13.700" font-family="Liberation Sans, sans-serif" font-size="8" font-weight="bold" fill="#f0fadc" text-anchor="middle">$</text></svg>
<svg class="i" style="left:592.5px;top:643.0px;" width="14" height="14" viewBox="0 0 16 16" preserveAspectRatio="none"><circle cx="8" cy="8" r="7.400" fill="#3f78d0" stroke="#2856a6" stroke-width="1"/><circle cx="8" cy="8" r="5.600" fill="none" stroke="#c9dcf6" stroke-width="1"/><text x="8" y="11.800" font-family="Liberation Sans, sans-serif" font-size="10" font-weight="bold" fill="#fff" text-anchor="middle">?</text></svg>
<svg class="i" style="left:609.5px;top:642.5px;" width="15" height="15" viewBox="0 0 16 16" preserveAspectRatio="none"><path d="M1.500 9L8.500 2.500H14V8L7 14.500z" fill="#f5b858" stroke="#c9842a" stroke-width="1" stroke-linejoin="round"/><circle cx="11.500" cy="5" r="1.200" fill="#fff" stroke="#8a5a14" stroke-width=".7"/><path d="M11.500 5c2.500 0 3.500 2 2.500 5" fill="none" stroke="#555" stroke-width=".8"/></svg>
<div style="left:676px;top:641px;width:352px;height:20px;background:#f0f0f0;"></div>
<svg class="i" style="left:682px;top:646px;" width="5" height="8" viewBox="0 0 5 8"><path d="M4.500 .5L.5 4L4.500 7.500z" fill="#d0d0d0"/></svg>
<svg class="i" style="left:1016px;top:646px;" width="5" height="8" viewBox="0 0 5 8"><path d="M.5 .5L4.500 4L.5 7.500z" fill="#d0d0d0"/></svg>
<div style="left:261px;top:666px;width:83px;height:26px;background:#fff;border:1px solid #ababab;"></div>
<span class="t" style="left:262px;top:665px;line-height:26px;height:26px;width:65px;text-align:center;">vše</span>
<svg class="i" style="left:331px;top:678px;" width="7" height="4" viewBox="0 0 7 4"><path d="M.3 0h6.400L3.500 3.200z" fill="#727272"/></svg>
<svg class="i" style="left:352px;top:671px;" width="15" height="15" viewBox="0 0 16 16" preserveAspectRatio="none"><defs><linearGradient id="gg" x1="0" y1="0" x2="0" y2="1"><stop offset="0" stop-color="#a4d858"/><stop offset=".5" stop-color="#7cba2c"/><stop offset="1" stop-color="#5c9a18"/></linearGradient></defs><circle cx="8" cy="8" r="7.400" fill="url(#gg)" stroke="#4f8a14" stroke-width="1"/><path d="M2.600 5.800a5.800 5.800 0 0 1 10.800 0a9 4 0 0 0-10.800 0z" fill="#d4f0a0" opacity=".55"/><path d="M4.300 8.300L7 11L11.800 5.300" fill="none" stroke="#3f6d10" stroke-width="3.200" stroke-linecap="round" stroke-linejoin="round"/><path d="M4.300 8.300L7 11L11.800 5.300" fill="none" stroke="#fff" stroke-width="1.700" stroke-linecap="round" stroke-linejoin="round"/></svg>
<div style="left:378px;top:667px;width:226px;height:24px;background:#dcdcdc;border:1px solid #ababab;"></div>
<span class="t" style="left:378px;top:668px;line-height:22px;height:22px;width:226px;text-align:center;">Všechny zápasy</span>
<svg class="i" style="left:614px;top:671px;" width="15" height="15" viewBox="0 0 16 16" preserveAspectRatio="none"><rect x=".5" y=".5" width="15" height="15" fill="#e6f0fc" stroke="#4d7fd0" stroke-width="1"/><rect x="11" y="1" width="4" height="14" fill="#9cc0f0"/><path d="M3 8L7 4.500V6.800H11V9.200H7V11.500z" fill="#4d90dc" stroke="#1f559e" stroke-width=".8" stroke-linejoin="round"/></svg>
<svg class="i" style="left:646px;top:672px;" width="12" height="14.5" viewBox="0 0 14 16" preserveAspectRatio="none"><rect x=".5" y="1" width="13" height="14.500" fill="#78b0ec" stroke="#3c6cb0" stroke-width="1"/><rect x="1" y="1.500" width="12" height="3" fill="#c4dcf8"/><text x="7" y="13.500" font-family="Liberation Sans, sans-serif" font-size="10" font-weight="bold" fill="#1c2f5c" text-anchor="middle">?</text></svg>
<div style="left:667px;top:670px;width:17px;height:17px;background:#fff;border:1px solid #ababab;"></div>
<svg class="i" style="left:670px;top:673px;" width="11" height="11" viewBox="0 0 11 11"><path d="M1.500 6L4.500 9.500L10 1.500" fill="none" stroke="#404040" stroke-width="1.200"/></svg>
<span class="t" style="left:687px;top:667px;line-height:24px;height:24px;transform:scaleX(0.9473);transform-origin:0 0;">Soutěže:</span>
<div style="left:740px;top:666px;width:170px;height:26px;background:#fff;border:1px solid #ababab;"></div>
<span class="t" style="left:741px;top:665px;line-height:26px;height:26px;width:152px;text-align:center;transform:scaleX(1.0174);transform-origin:50% 0;">Soutěž z Úvodního okna</span>
<svg class="i" style="left:897px;top:678px;" width="7" height="4" viewBox="0 0 7 4"><path d="M.3 0h6.400L3.500 3.200z" fill="#727272"/></svg>
<svg class="i" style="left:917.5px;top:671px;" width="15" height="15" viewBox="0 0 16 16" preserveAspectRatio="none"><rect x=".5" y=".5" width="15" height="15" fill="#e6f0fc" stroke="#4d7fd0" stroke-width="1"/><rect x="11" y="1" width="4" height="14" fill="#9cc0f0"/><path d="M3 8L7 4.500V6.800H11V9.200H7V11.500z" fill="#4d90dc" stroke="#1f559e" stroke-width=".8" stroke-linejoin="round"/></svg>
<div style="left:944px;top:667px;width:34px;height:24px;background:#fff;border:1px solid #c6c6c6;"></div>
<span class="t" style="left:944px;top:667px;line-height:22px;height:22px;width:34px;text-align:center;">BB</span>
<div style="left:984px;top:667px;width:60px;height:24px;background:#fff;border:1px solid #c6c6c6;"></div>
<span class="t" style="left:1006px;top:667px;line-height:22px;height:22px;transform:scaleX(1.0785);transform-origin:0 0;">Profi</span>
<div style="left:249px;top:693px;width:784px;height:2px;background:#b8b8b8"></div>
<div style="left:3px;top:696px;width:121px;height:21px;background:#fff;border:1px solid #ababab;"></div>
<span class="t" style="left:33px;top:696px;line-height:21px;height:21px;transform:scaleX(1.0386);transform-origin:0 0;">Tipsport</span>
<svg class="i" style="left:111px;top:705px;" width="7" height="4" viewBox="0 0 7 4"><path d="M.3 0h6.400L3.500 3.200z" fill="#727272"/></svg>
<span class="t" style="left:145px;top:697px;line-height:20px;height:20px;transform:scaleX(0.9475);transform-origin:0 0;">43-27-30&nbsp; 1.5:1.2</span>
<span class="t" style="left:398px;top:697px;line-height:20px;height:20px;transform:scaleX(0.9312);transform-origin:0 0;">28.2.2024 3:2 (2:1, 1:1) ... [1.49]</span>
<span class="t" style="left:724px;top:697px;line-height:20px;height:20px;">Tikety</span>
<span class="t" style="left:796px;top:697px;line-height:20px;height:20px;">Soutěž</span>
<svg class="i" style="left:834px;top:702.5px;" width="9.5" height="8.5" viewBox="0 0 9.500 9" preserveAspectRatio="none"><path d="M0 .3h9.400L4.700 8.800z" fill="#383838"/></svg>
<span class="t" style="left:877px;top:697px;line-height:20px;height:20px;">?</span>
<svg class="i" style="left:903px;top:699px;" width="15" height="15" viewBox="0 0 15 15"><circle cx="7.500" cy="7.500" r="6.200" fill="#ffff00" stroke="#111" stroke-width="1"/></svg>
<span class="t" style="left:926px;top:697px;line-height:20px;height:20px;">11:11</span>
<span class="t" style="left:961px;top:697px;line-height:20px;height:20px;transform:scaleX(1.0597);transform-origin:0 0;">Offline</span>
<svg class="i" style="left:999.5px;top:702.5px;" width="9.5" height="8.5" viewBox="0 0 9.500 9" preserveAspectRatio="none"><path d="M0 .3h9.400L4.700 8.800z" fill="#383838"/></svg>
<div style="left:1014px;top:696px;width:1px;height:23px;background:#c8c8c8"></div>
<div style="left:1026px;top:703px;width:2px;height:2px;background:#a0a0a0;"></div>
<div style="left:1022px;top:707px;width:2px;height:2px;background:#a0a0a0;"></div>
<div style="left:1026px;top:707px;width:2px;height:2px;background:#a0a0a0;"></div>
<div style="left:1018px;top:711px;width:2px;height:2px;background:#a0a0a0;"></div>
<div style="left:1022px;top:711px;width:2px;height:2px;background:#a0a0a0;"></div>
<div style="left:1026px;top:711px;width:2px;height:2px;background:#a0a0a0;"></div>
<div style="left:0px;top:30px;width:1px;height:690px;background:#404040"></div>
<div style="left:1032px;top:30px;width:1px;height:690px;background:#404040"></div>
<div style="left:0px;top:719px;width:1033px;height:1px;background:#404040"></div>
</div></body></html>
